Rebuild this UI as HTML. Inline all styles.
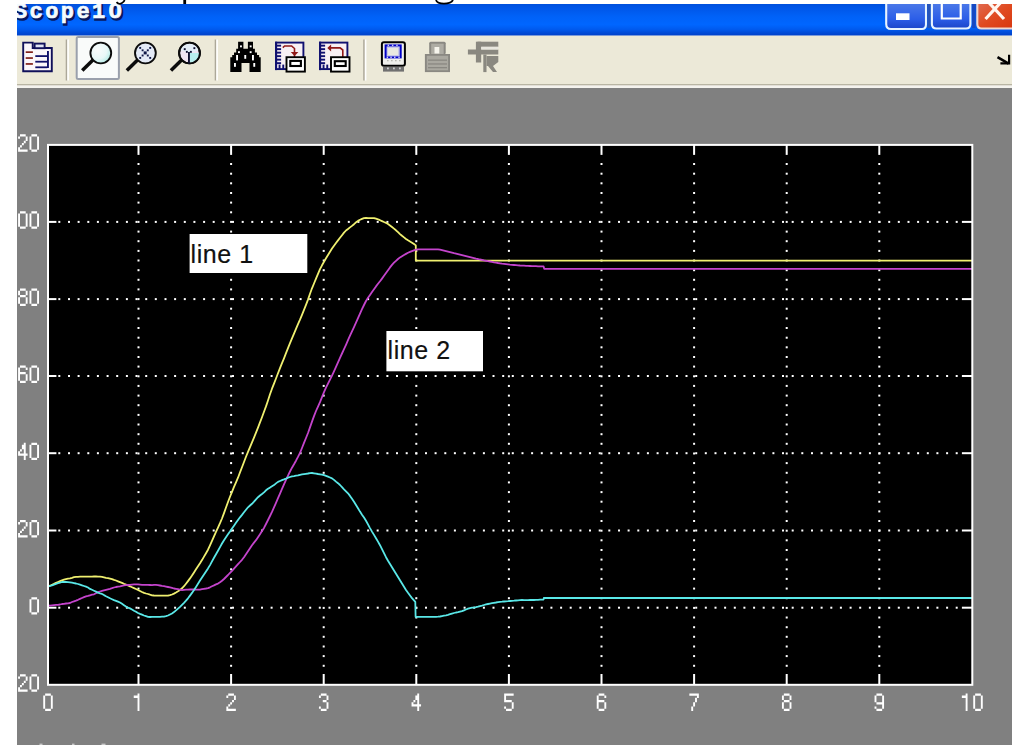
<!DOCTYPE html>
<html><head><meta charset="utf-8"><style>
html,body{margin:0;padding:0;background:#fff;width:1017px;height:750px;overflow:hidden}
svg{display:block}
</style></head><body>
<svg width="1017" height="750" viewBox="0 0 1017 750" shape-rendering="auto">
<rect width="1017" height="750" fill="#fff"/>
<clipPath id="win"><rect x="17" y="0" width="995" height="745"/></clipPath>
<g clip-path="url(#win)">
<defs><linearGradient id="tg" x1="0" y1="0" x2="0" y2="1"><stop offset="0" stop-color="#0050dc"/><stop offset="0.12" stop-color="#0056e8"/><stop offset="0.4" stop-color="#0062f8"/><stop offset="0.65" stop-color="#0066ff"/><stop offset="0.8" stop-color="#005aee"/><stop offset="0.9" stop-color="#004cd8"/><stop offset="1" stop-color="#0040c8"/></linearGradient><linearGradient id="bg" x1="0" y1="0" x2="0" y2="1"><stop offset="0" stop-color="#4a78e8"/><stop offset="0.6" stop-color="#2c5ee8"/><stop offset="1" stop-color="#1c46c8"/></linearGradient><linearGradient id="cg" x1="0" y1="0" x2="1" y2="1"><stop offset="0" stop-color="#e06a50"/><stop offset="0.5" stop-color="#e04a20"/><stop offset="1" stop-color="#d83810"/></linearGradient><radialGradient id="mg1" cx="0.6" cy="0.4" r="0.6"><stop offset="0" stop-color="#ffffff"/><stop offset="1" stop-color="#80e0e0"/></radialGradient></defs><rect x="17" y="4" width="995" height="31.7" fill="url(#tg)"/><g transform="translate(1.5,1.5)" fill="#081860" stroke="#081860" stroke-width="1.6"><text x="14" y="18.4" font-family="Liberation Mono" font-weight="bold" font-size="22" letter-spacing="2.4">Scope1</text><text x="108.6" y="18.4" font-family="Liberation Sans" font-weight="bold" font-size="22" transform="translate(108.6 18.4) scale(1.1 1) translate(-108.6 -18.4)">0</text></g><g transform="translate(0,0)" fill="#f4fbff" stroke="#f4fbff" stroke-width="0.7"><text x="14" y="18.4" font-family="Liberation Mono" font-weight="bold" font-size="22" letter-spacing="2.4">Scope1</text><text x="108.6" y="18.4" font-family="Liberation Sans" font-weight="bold" font-size="22" transform="translate(108.6 18.4) scale(1.1 1) translate(-108.6 -18.4)">0</text></g><path d="M886.2 4 V24 Q886.2 29 891 29 H922 Q926 29 926 24 V4 Z" fill="url(#bg)"/><path d="M886.2 4 V24 Q886.2 29 891 29 H922 Q926 29 926 24 V4" fill="none" stroke="#e8f4ff" stroke-width="2.1"/><rect x="896" y="13.3" width="13.5" height="6.7" fill="#fff"/><rect x="927.3" y="4" width="3.4" height="24" fill="#2854b8"/><path d="M931.9 4 V24 Q931.9 28.5 936.5 28.5 H966 Q970.4 28.5 970.4 24 V4 Z" fill="url(#bg)"/><path d="M931.9 4 V24 Q931.9 28.5 936.5 28.5 H966 Q970.4 28.5 970.4 24 V4" fill="none" stroke="#e8f4ff" stroke-width="2.1"/><path d="M941.8 4 V18.5 H960.7 V4" fill="none" stroke="#fff" stroke-width="2.2"/><rect x="972" y="4" width="3.5" height="24" fill="#1848c0"/><path d="M977.3 4 V24 Q977.3 28.5 981.5 28.5 H1012 V4 Z" fill="url(#cg)"/><path d="M977.3 4 V24 Q977.3 28.5 981.5 28.5 H1012" fill="none" stroke="#f0d8d0" stroke-width="2.1"/><path d="M985.5 -1 L1004 19 M1004 -1 L985.5 19" stroke="#fff6f0" stroke-width="3.2"/><rect x="0" y="0" width="1017" height="4" fill="#fff"/><path d="M116.5 2.2 Q119 5 122 3 Q124 2 124.6 0" fill="none" stroke="#000" stroke-width="1.8"/><rect x="183.3" y="0" width="2.8" height="4" fill="#000"/><path d="M436 0 Q437 3.6 444 3.6 Q451 3.6 453 0" fill="none" stroke="#000" stroke-width="1.8"/>
<rect x="17" y="35.7" width="995" height="48.3" fill="#ece9d8"/><rect x="17" y="84" width="995" height="1.6" fill="#b9b6a4"/><rect x="17" y="85.6" width="995" height="2.4" fill="#f4f3ee"/><rect x="65.7" y="39.5" width="1.6" height="41" fill="#aca899"/><rect x="67.3" y="39.5" width="1.6" height="41" fill="#ffffff"/><rect x="214.7" y="39.5" width="1.6" height="41" fill="#aca899"/><rect x="216.29999999999998" y="39.5" width="1.6" height="41" fill="#ffffff"/><rect x="363.2" y="39.5" width="1.6" height="41" fill="#aca899"/><rect x="364.8" y="39.5" width="1.6" height="41" fill="#ffffff"/><path d="M23.2 71.3 V42.6 H32.7 V48 H51.8 V71.3 Z" fill="#fbf6fa" stroke="#10105a" stroke-width="1.9"/><rect x="34.6" y="43.6" width="10" height="4.6" fill="#e0e4f4" stroke="#10105a" stroke-width="1.9"/><g fill="#802018"><rect x="25.7" y="51.3" width="7.2" height="1.7"/><rect x="25.7" y="57.2" width="7.2" height="1.7"/><rect x="25.7" y="63.1" width="7.2" height="1.7"/></g><g fill="#10106a"><rect x="47" y="51" width="1.9" height="17"/><rect x="35.3" y="55.2" width="12" height="1.8"/><rect x="35.3" y="60.8" width="12" height="1.8"/><rect x="35.3" y="66.4" width="12" height="1.8"/></g><rect x="76.7" y="37" width="42.2" height="41.9" rx="1.5" fill="#f9fbfa" stroke="#9aa0ac" stroke-width="2"/><radialGradient id="mg2" cx="0.35" cy="0.35" r="0.8"><stop offset="0" stop-color="#fafcfc"/><stop offset="0.55" stop-color="#e8f8f8"/><stop offset="1" stop-color="#a0e8e0"/></radialGradient><line x1="83.5" y1="69.3" x2="92.2" y2="60.8" stroke="#0c0c0c" stroke-width="3.5" stroke-linecap="square"/><circle cx="100.8" cy="53" r="10.4" fill="url(#mg2)" stroke="#0c0c0c" stroke-width="1.9"/><line x1="128.1" y1="69.3" x2="136.8" y2="60.8" stroke="#0c0c0c" stroke-width="3.5" stroke-linecap="square"/><circle cx="145.4" cy="53" r="10.4" fill="#e4eaf6" stroke="#0c0c0c" stroke-width="1.9"/><g fill="#101848"><rect x="139.25" y="46.95" width="1.9" height="1.9"/><rect x="139.25" y="56.95" width="1.9" height="1.9"/><rect x="141.65" y="49.35" width="1.9" height="1.9"/><rect x="141.65" y="54.55" width="1.9" height="1.9"/><rect x="146.85" y="49.35" width="1.9" height="1.9"/><rect x="146.85" y="54.55" width="1.9" height="1.9"/><rect x="149.25" y="46.95" width="1.9" height="1.9"/><rect x="149.25" y="56.95" width="1.9" height="1.9"/><rect x="143.7" y="51.4" width="3" height="3"/></g><line x1="172.2" y1="69.3" x2="180.9" y2="60.8" stroke="#0c0c0c" stroke-width="3.5" stroke-linecap="square"/><circle cx="189.5" cy="53" r="10.4" fill="#f0e4f2" stroke="#0c0c0c" stroke-width="1.9"/><path d="M189.5 53 L199.9 53 A10.4 10.4 0 0 1 189.5 63.4 Z" fill="#b8eeee"/><path d="M180 50 A10.4 10.4 0 0 1 199 50 L189.5 53 Z" fill="#e4eef8"/><circle cx="189.5" cy="53" r="10.4" fill="none" stroke="#0c0c0c" stroke-width="1.9"/><g fill="#101030"><rect x="183.8" y="48.2" width="1.9" height="1.9"/><rect x="185.9" y="50.9" width="1.9" height="1.9"/><rect x="193.4" y="47.2" width="1.9" height="1.9"/><rect x="189.9" y="50.9" width="1.9" height="1.9"/><rect x="188" y="52" width="1.9" height="11.6"/></g><path d="M238.1 41.7 H243.4 V48.7 H247.9 V41.7 H253 V48.7 H254.9 V52.5 H257 V55 H259.1 V57.2 H260.7 V71.9 H249.5 V63 H241.5 V71.9 H230.3 V57.2 H232.2 V55 H234 V52.5 H236.2 V48.7 H238.1 Z" fill="#000"/><g fill="#fff"><rect x="240.0" y="45.4" width="1.9" height="1.9"/><rect x="249.7" y="45.4" width="1.9" height="1.9"/><rect x="238.0" y="51.2" width="1.9" height="1.9"/><rect x="249.7" y="51.2" width="1.9" height="1.9"/><rect x="236.1" y="55" width="1.9" height="5.4"/><rect x="244.3" y="55" width="1.9" height="3.8"/><rect x="252" y="55" width="1.9" height="5.4"/><rect x="234" y="63" width="1.9" height="3.8"/><rect x="253.3" y="63" width="1.9" height="3.8"/></g><rect x="276.1" y="42.6" width="27.3" height="26.5" fill="#f8f0f4" stroke="#101070" stroke-width="1.9"/><rect x="275.1" y="41.7" width="2" height="28.4" fill="#101070"/><rect x="276.1" y="44.7" width="5" height="1.9" fill="#101070"/><rect x="276.1" y="48.2" width="5" height="1.9" fill="#101070"/><rect x="276.1" y="51.7" width="5" height="1.9" fill="#101070"/><rect x="276.1" y="55.2" width="5" height="1.9" fill="#101070"/><rect x="276.1" y="58.7" width="5" height="1.9" fill="#101070"/><rect x="276.1" y="62.2" width="5" height="1.9" fill="#101070"/><rect x="278.6" y="64.6" width="1.9" height="5" fill="#101070"/><rect x="282.3" y="64.6" width="1.9" height="5" fill="#101070"/><path d="M282.8 47.6 L284.6 46 H291.6 L294.5 48.5 V57" fill="none" stroke="#901818" stroke-width="1.6"/><path d="M290.70000000000005 52.1 H298.40000000000003 L294.55 56 Z" fill="#901818"/><rect x="286.5" y="57.2" width="18.4" height="14.4" fill="#fff" stroke="#000" stroke-width="1.9"/><rect x="290.3" y="60.9" width="10.6" height="5.1" fill="#ffffff" stroke="#000" stroke-width="2.1"/><rect x="320.1" y="42.6" width="27.3" height="26.5" fill="#f8f0f4" stroke="#101070" stroke-width="1.9"/><rect x="319.1" y="41.7" width="2" height="28.4" fill="#101070"/><rect x="320.1" y="44.7" width="5" height="1.9" fill="#101070"/><rect x="320.1" y="48.2" width="5" height="1.9" fill="#101070"/><rect x="320.1" y="51.7" width="5" height="1.9" fill="#101070"/><rect x="320.1" y="55.2" width="5" height="1.9" fill="#101070"/><rect x="320.1" y="58.7" width="5" height="1.9" fill="#101070"/><rect x="320.1" y="62.2" width="5" height="1.9" fill="#101070"/><rect x="322.6" y="64.6" width="1.9" height="5" fill="#101070"/><rect x="326.3" y="64.6" width="1.9" height="5" fill="#101070"/><path d="M329.1 47.9 H340.1 L342.8 50 V57" fill="none" stroke="#901818" stroke-width="1.6"/><path d="M331.1 44.4 V51.4 L327.3 47.9 Z" fill="#901818"/><rect x="331.0" y="57.2" width="18.5" height="14.4" fill="#fff" stroke="#000" stroke-width="1.9"/><rect x="334.8" y="61.2" width="10.9" height="4.8" fill="#ffffff" stroke="#000" stroke-width="2.1"/><rect x="381.9" y="42.2" width="23" height="23.5" rx="2" fill="#f0f0ec" stroke="#000" stroke-width="2"/><rect x="385.6" y="45.4" width="15.1" height="12" fill="#c8c8e8" stroke="#0000c8" stroke-width="2"/><rect x="388" y="48" width="10" height="7" fill="#e8e8e0"/><g fill="#c8c8f8"><rect x="387.6" y="44.6" width="1.5" height="1.5"/><rect x="391.9" y="44.6" width="1.5" height="1.5"/><rect x="396.2" y="44.6" width="1.5" height="1.5"/><rect x="386.6" y="56.6" width="1.5" height="1.5"/><rect x="390.3" y="56.6" width="1.5" height="1.5"/><rect x="394" y="56.6" width="1.5" height="1.5"/><rect x="398.3" y="56.6" width="1.5" height="1.5"/></g><g fill="#b8b8b0"><rect x="387" y="60" width="1.6" height="1.3"/><rect x="391" y="60" width="1.6" height="1.3"/><rect x="395" y="60" width="1.6" height="1.3"/><rect x="399" y="60" width="1.6" height="1.3"/></g><rect x="383" y="66.8" width="21" height="4.8" fill="#707070"/><g fill="#d0d0d0"><rect x="387" y="67.5" width="1.8" height="1.8"/><rect x="393" y="67.5" width="1.8" height="1.8"/><rect x="399" y="67.5" width="1.8" height="1.8"/></g><rect x="429.2" y="41.7" width="16.5" height="12.5" rx="1.5" fill="#8a8882"/><rect x="431.2" y="43.7" width="12.5" height="10.5" fill="#aeaca4"/><rect x="434.5" y="47" width="4.8" height="6.5" fill="#f6f4ec"/><rect x="424.9" y="54" width="25.1" height="18.1" fill="#8a8882"/><rect x="426.8" y="55.8" width="21.3" height="14.5" fill="#aaa8a0"/><g fill="#8a8882"><rect x="428" y="59.5" width="19" height="1.3"/><rect x="428" y="63.3" width="19" height="1.3"/><rect x="428" y="67" width="19" height="1.3"/></g><g fill="#8a8880"><rect x="477.5" y="41.7" width="20.8" height="5.1"/><rect x="475.9" y="41.7" width="5.3" height="20.8"/><rect x="467.9" y="49.5" width="30.4" height="5"/><rect x="483.3" y="54.5" width="3.2" height="17.6"/><path d="M486.5 56 H498.3 V62 L493 66 L497 72 H493 L488 66 H486.5 Z"/></g><rect x="481.2" y="46.8" width="17" height="2.7" fill="#e8e6de"/><path d="M1009.1 54.8 V63.4 H1000.4" fill="none" stroke="#000" stroke-width="2.2"/><path d="M997.5 57.2 L1008.6 63.6" fill="none" stroke="#000" stroke-width="2.6"/>
<rect x="17" y="88" width="995" height="657" fill="#808080"/><rect x="48.0" y="144.9" width="924.3" height="539.9" fill="#000"/><g fill="#fff"><rect x="137.5" y="163.0" width="2" height="2"/><rect x="137.5" y="172.7" width="2" height="2"/><rect x="137.5" y="182.3" width="2" height="2"/><rect x="137.5" y="192.0" width="2" height="2"/><rect x="137.5" y="201.6" width="2" height="2"/><rect x="137.5" y="211.3" width="2" height="2"/><rect x="137.5" y="220.9" width="2" height="2"/><rect x="137.5" y="230.6" width="2" height="2"/><rect x="137.5" y="240.2" width="2" height="2"/><rect x="137.5" y="249.9" width="2" height="2"/><rect x="137.5" y="259.5" width="2" height="2"/><rect x="137.5" y="269.2" width="2" height="2"/><rect x="137.5" y="278.8" width="2" height="2"/><rect x="137.5" y="288.4" width="2" height="2"/><rect x="137.5" y="298.1" width="2" height="2"/><rect x="137.5" y="307.7" width="2" height="2"/><rect x="137.5" y="317.4" width="2" height="2"/><rect x="137.5" y="327.0" width="2" height="2"/><rect x="137.5" y="336.7" width="2" height="2"/><rect x="137.5" y="346.3" width="2" height="2"/><rect x="137.5" y="356.0" width="2" height="2"/><rect x="137.5" y="365.6" width="2" height="2"/><rect x="137.5" y="375.3" width="2" height="2"/><rect x="137.5" y="384.9" width="2" height="2"/><rect x="137.5" y="394.6" width="2" height="2"/><rect x="137.5" y="404.2" width="2" height="2"/><rect x="137.5" y="413.9" width="2" height="2"/><rect x="137.5" y="423.5" width="2" height="2"/><rect x="137.5" y="433.2" width="2" height="2"/><rect x="137.5" y="442.8" width="2" height="2"/><rect x="137.5" y="452.5" width="2" height="2"/><rect x="137.5" y="462.1" width="2" height="2"/><rect x="137.5" y="471.8" width="2" height="2"/><rect x="137.5" y="481.4" width="2" height="2"/><rect x="137.5" y="491.1" width="2" height="2"/><rect x="137.5" y="500.7" width="2" height="2"/><rect x="137.5" y="510.4" width="2" height="2"/><rect x="137.5" y="520.0" width="2" height="2"/><rect x="137.5" y="529.7" width="2" height="2"/><rect x="137.5" y="539.3" width="2" height="2"/><rect x="137.5" y="549.0" width="2" height="2"/><rect x="137.5" y="558.6" width="2" height="2"/><rect x="137.5" y="568.3" width="2" height="2"/><rect x="137.5" y="577.9" width="2" height="2"/><rect x="137.5" y="587.6" width="2" height="2"/><rect x="137.5" y="597.2" width="2" height="2"/><rect x="137.5" y="606.9" width="2" height="2"/><rect x="137.5" y="616.5" width="2" height="2"/><rect x="137.5" y="626.2" width="2" height="2"/><rect x="137.5" y="635.8" width="2" height="2"/><rect x="137.5" y="645.5" width="2" height="2"/><rect x="137.5" y="655.1" width="2" height="2"/><rect x="137.5" y="664.8" width="2" height="2"/><rect x="230.1" y="163.0" width="2" height="2"/><rect x="230.1" y="172.7" width="2" height="2"/><rect x="230.1" y="182.3" width="2" height="2"/><rect x="230.1" y="192.0" width="2" height="2"/><rect x="230.1" y="201.6" width="2" height="2"/><rect x="230.1" y="211.3" width="2" height="2"/><rect x="230.1" y="220.9" width="2" height="2"/><rect x="230.1" y="230.6" width="2" height="2"/><rect x="230.1" y="240.2" width="2" height="2"/><rect x="230.1" y="249.9" width="2" height="2"/><rect x="230.1" y="259.5" width="2" height="2"/><rect x="230.1" y="269.2" width="2" height="2"/><rect x="230.1" y="278.8" width="2" height="2"/><rect x="230.1" y="288.4" width="2" height="2"/><rect x="230.1" y="298.1" width="2" height="2"/><rect x="230.1" y="307.7" width="2" height="2"/><rect x="230.1" y="317.4" width="2" height="2"/><rect x="230.1" y="327.0" width="2" height="2"/><rect x="230.1" y="336.7" width="2" height="2"/><rect x="230.1" y="346.3" width="2" height="2"/><rect x="230.1" y="356.0" width="2" height="2"/><rect x="230.1" y="365.6" width="2" height="2"/><rect x="230.1" y="375.3" width="2" height="2"/><rect x="230.1" y="384.9" width="2" height="2"/><rect x="230.1" y="394.6" width="2" height="2"/><rect x="230.1" y="404.2" width="2" height="2"/><rect x="230.1" y="413.9" width="2" height="2"/><rect x="230.1" y="423.5" width="2" height="2"/><rect x="230.1" y="433.2" width="2" height="2"/><rect x="230.1" y="442.8" width="2" height="2"/><rect x="230.1" y="452.5" width="2" height="2"/><rect x="230.1" y="462.1" width="2" height="2"/><rect x="230.1" y="471.8" width="2" height="2"/><rect x="230.1" y="481.4" width="2" height="2"/><rect x="230.1" y="491.1" width="2" height="2"/><rect x="230.1" y="500.7" width="2" height="2"/><rect x="230.1" y="510.4" width="2" height="2"/><rect x="230.1" y="520.0" width="2" height="2"/><rect x="230.1" y="529.7" width="2" height="2"/><rect x="230.1" y="539.3" width="2" height="2"/><rect x="230.1" y="549.0" width="2" height="2"/><rect x="230.1" y="558.6" width="2" height="2"/><rect x="230.1" y="568.3" width="2" height="2"/><rect x="230.1" y="577.9" width="2" height="2"/><rect x="230.1" y="587.6" width="2" height="2"/><rect x="230.1" y="597.2" width="2" height="2"/><rect x="230.1" y="606.9" width="2" height="2"/><rect x="230.1" y="616.5" width="2" height="2"/><rect x="230.1" y="626.2" width="2" height="2"/><rect x="230.1" y="635.8" width="2" height="2"/><rect x="230.1" y="645.5" width="2" height="2"/><rect x="230.1" y="655.1" width="2" height="2"/><rect x="230.1" y="664.8" width="2" height="2"/><rect x="322.7" y="163.0" width="2" height="2"/><rect x="322.7" y="172.7" width="2" height="2"/><rect x="322.7" y="182.3" width="2" height="2"/><rect x="322.7" y="192.0" width="2" height="2"/><rect x="322.7" y="201.6" width="2" height="2"/><rect x="322.7" y="211.3" width="2" height="2"/><rect x="322.7" y="220.9" width="2" height="2"/><rect x="322.7" y="230.6" width="2" height="2"/><rect x="322.7" y="240.2" width="2" height="2"/><rect x="322.7" y="249.9" width="2" height="2"/><rect x="322.7" y="259.5" width="2" height="2"/><rect x="322.7" y="269.2" width="2" height="2"/><rect x="322.7" y="278.8" width="2" height="2"/><rect x="322.7" y="288.4" width="2" height="2"/><rect x="322.7" y="298.1" width="2" height="2"/><rect x="322.7" y="307.7" width="2" height="2"/><rect x="322.7" y="317.4" width="2" height="2"/><rect x="322.7" y="327.0" width="2" height="2"/><rect x="322.7" y="336.7" width="2" height="2"/><rect x="322.7" y="346.3" width="2" height="2"/><rect x="322.7" y="356.0" width="2" height="2"/><rect x="322.7" y="365.6" width="2" height="2"/><rect x="322.7" y="375.3" width="2" height="2"/><rect x="322.7" y="384.9" width="2" height="2"/><rect x="322.7" y="394.6" width="2" height="2"/><rect x="322.7" y="404.2" width="2" height="2"/><rect x="322.7" y="413.9" width="2" height="2"/><rect x="322.7" y="423.5" width="2" height="2"/><rect x="322.7" y="433.2" width="2" height="2"/><rect x="322.7" y="442.8" width="2" height="2"/><rect x="322.7" y="452.5" width="2" height="2"/><rect x="322.7" y="462.1" width="2" height="2"/><rect x="322.7" y="471.8" width="2" height="2"/><rect x="322.7" y="481.4" width="2" height="2"/><rect x="322.7" y="491.1" width="2" height="2"/><rect x="322.7" y="500.7" width="2" height="2"/><rect x="322.7" y="510.4" width="2" height="2"/><rect x="322.7" y="520.0" width="2" height="2"/><rect x="322.7" y="529.7" width="2" height="2"/><rect x="322.7" y="539.3" width="2" height="2"/><rect x="322.7" y="549.0" width="2" height="2"/><rect x="322.7" y="558.6" width="2" height="2"/><rect x="322.7" y="568.3" width="2" height="2"/><rect x="322.7" y="577.9" width="2" height="2"/><rect x="322.7" y="587.6" width="2" height="2"/><rect x="322.7" y="597.2" width="2" height="2"/><rect x="322.7" y="606.9" width="2" height="2"/><rect x="322.7" y="616.5" width="2" height="2"/><rect x="322.7" y="626.2" width="2" height="2"/><rect x="322.7" y="635.8" width="2" height="2"/><rect x="322.7" y="645.5" width="2" height="2"/><rect x="322.7" y="655.1" width="2" height="2"/><rect x="322.7" y="664.8" width="2" height="2"/><rect x="415.3" y="163.0" width="2" height="2"/><rect x="415.3" y="172.7" width="2" height="2"/><rect x="415.3" y="182.3" width="2" height="2"/><rect x="415.3" y="192.0" width="2" height="2"/><rect x="415.3" y="201.6" width="2" height="2"/><rect x="415.3" y="211.3" width="2" height="2"/><rect x="415.3" y="220.9" width="2" height="2"/><rect x="415.3" y="230.6" width="2" height="2"/><rect x="415.3" y="240.2" width="2" height="2"/><rect x="415.3" y="249.9" width="2" height="2"/><rect x="415.3" y="259.5" width="2" height="2"/><rect x="415.3" y="269.2" width="2" height="2"/><rect x="415.3" y="278.8" width="2" height="2"/><rect x="415.3" y="288.4" width="2" height="2"/><rect x="415.3" y="298.1" width="2" height="2"/><rect x="415.3" y="307.7" width="2" height="2"/><rect x="415.3" y="317.4" width="2" height="2"/><rect x="415.3" y="327.0" width="2" height="2"/><rect x="415.3" y="336.7" width="2" height="2"/><rect x="415.3" y="346.3" width="2" height="2"/><rect x="415.3" y="356.0" width="2" height="2"/><rect x="415.3" y="365.6" width="2" height="2"/><rect x="415.3" y="375.3" width="2" height="2"/><rect x="415.3" y="384.9" width="2" height="2"/><rect x="415.3" y="394.6" width="2" height="2"/><rect x="415.3" y="404.2" width="2" height="2"/><rect x="415.3" y="413.9" width="2" height="2"/><rect x="415.3" y="423.5" width="2" height="2"/><rect x="415.3" y="433.2" width="2" height="2"/><rect x="415.3" y="442.8" width="2" height="2"/><rect x="415.3" y="452.5" width="2" height="2"/><rect x="415.3" y="462.1" width="2" height="2"/><rect x="415.3" y="471.8" width="2" height="2"/><rect x="415.3" y="481.4" width="2" height="2"/><rect x="415.3" y="491.1" width="2" height="2"/><rect x="415.3" y="500.7" width="2" height="2"/><rect x="415.3" y="510.4" width="2" height="2"/><rect x="415.3" y="520.0" width="2" height="2"/><rect x="415.3" y="529.7" width="2" height="2"/><rect x="415.3" y="539.3" width="2" height="2"/><rect x="415.3" y="549.0" width="2" height="2"/><rect x="415.3" y="558.6" width="2" height="2"/><rect x="415.3" y="568.3" width="2" height="2"/><rect x="415.3" y="577.9" width="2" height="2"/><rect x="415.3" y="587.6" width="2" height="2"/><rect x="415.3" y="597.2" width="2" height="2"/><rect x="415.3" y="606.9" width="2" height="2"/><rect x="415.3" y="616.5" width="2" height="2"/><rect x="415.3" y="626.2" width="2" height="2"/><rect x="415.3" y="635.8" width="2" height="2"/><rect x="415.3" y="645.5" width="2" height="2"/><rect x="415.3" y="655.1" width="2" height="2"/><rect x="415.3" y="664.8" width="2" height="2"/><rect x="507.9" y="163.0" width="2" height="2"/><rect x="507.9" y="172.7" width="2" height="2"/><rect x="507.9" y="182.3" width="2" height="2"/><rect x="507.9" y="192.0" width="2" height="2"/><rect x="507.9" y="201.6" width="2" height="2"/><rect x="507.9" y="211.3" width="2" height="2"/><rect x="507.9" y="220.9" width="2" height="2"/><rect x="507.9" y="230.6" width="2" height="2"/><rect x="507.9" y="240.2" width="2" height="2"/><rect x="507.9" y="249.9" width="2" height="2"/><rect x="507.9" y="259.5" width="2" height="2"/><rect x="507.9" y="269.2" width="2" height="2"/><rect x="507.9" y="278.8" width="2" height="2"/><rect x="507.9" y="288.4" width="2" height="2"/><rect x="507.9" y="298.1" width="2" height="2"/><rect x="507.9" y="307.7" width="2" height="2"/><rect x="507.9" y="317.4" width="2" height="2"/><rect x="507.9" y="327.0" width="2" height="2"/><rect x="507.9" y="336.7" width="2" height="2"/><rect x="507.9" y="346.3" width="2" height="2"/><rect x="507.9" y="356.0" width="2" height="2"/><rect x="507.9" y="365.6" width="2" height="2"/><rect x="507.9" y="375.3" width="2" height="2"/><rect x="507.9" y="384.9" width="2" height="2"/><rect x="507.9" y="394.6" width="2" height="2"/><rect x="507.9" y="404.2" width="2" height="2"/><rect x="507.9" y="413.9" width="2" height="2"/><rect x="507.9" y="423.5" width="2" height="2"/><rect x="507.9" y="433.2" width="2" height="2"/><rect x="507.9" y="442.8" width="2" height="2"/><rect x="507.9" y="452.5" width="2" height="2"/><rect x="507.9" y="462.1" width="2" height="2"/><rect x="507.9" y="471.8" width="2" height="2"/><rect x="507.9" y="481.4" width="2" height="2"/><rect x="507.9" y="491.1" width="2" height="2"/><rect x="507.9" y="500.7" width="2" height="2"/><rect x="507.9" y="510.4" width="2" height="2"/><rect x="507.9" y="520.0" width="2" height="2"/><rect x="507.9" y="529.7" width="2" height="2"/><rect x="507.9" y="539.3" width="2" height="2"/><rect x="507.9" y="549.0" width="2" height="2"/><rect x="507.9" y="558.6" width="2" height="2"/><rect x="507.9" y="568.3" width="2" height="2"/><rect x="507.9" y="577.9" width="2" height="2"/><rect x="507.9" y="587.6" width="2" height="2"/><rect x="507.9" y="597.2" width="2" height="2"/><rect x="507.9" y="606.9" width="2" height="2"/><rect x="507.9" y="616.5" width="2" height="2"/><rect x="507.9" y="626.2" width="2" height="2"/><rect x="507.9" y="635.8" width="2" height="2"/><rect x="507.9" y="645.5" width="2" height="2"/><rect x="507.9" y="655.1" width="2" height="2"/><rect x="507.9" y="664.8" width="2" height="2"/><rect x="600.5" y="163.0" width="2" height="2"/><rect x="600.5" y="172.7" width="2" height="2"/><rect x="600.5" y="182.3" width="2" height="2"/><rect x="600.5" y="192.0" width="2" height="2"/><rect x="600.5" y="201.6" width="2" height="2"/><rect x="600.5" y="211.3" width="2" height="2"/><rect x="600.5" y="220.9" width="2" height="2"/><rect x="600.5" y="230.6" width="2" height="2"/><rect x="600.5" y="240.2" width="2" height="2"/><rect x="600.5" y="249.9" width="2" height="2"/><rect x="600.5" y="259.5" width="2" height="2"/><rect x="600.5" y="269.2" width="2" height="2"/><rect x="600.5" y="278.8" width="2" height="2"/><rect x="600.5" y="288.4" width="2" height="2"/><rect x="600.5" y="298.1" width="2" height="2"/><rect x="600.5" y="307.7" width="2" height="2"/><rect x="600.5" y="317.4" width="2" height="2"/><rect x="600.5" y="327.0" width="2" height="2"/><rect x="600.5" y="336.7" width="2" height="2"/><rect x="600.5" y="346.3" width="2" height="2"/><rect x="600.5" y="356.0" width="2" height="2"/><rect x="600.5" y="365.6" width="2" height="2"/><rect x="600.5" y="375.3" width="2" height="2"/><rect x="600.5" y="384.9" width="2" height="2"/><rect x="600.5" y="394.6" width="2" height="2"/><rect x="600.5" y="404.2" width="2" height="2"/><rect x="600.5" y="413.9" width="2" height="2"/><rect x="600.5" y="423.5" width="2" height="2"/><rect x="600.5" y="433.2" width="2" height="2"/><rect x="600.5" y="442.8" width="2" height="2"/><rect x="600.5" y="452.5" width="2" height="2"/><rect x="600.5" y="462.1" width="2" height="2"/><rect x="600.5" y="471.8" width="2" height="2"/><rect x="600.5" y="481.4" width="2" height="2"/><rect x="600.5" y="491.1" width="2" height="2"/><rect x="600.5" y="500.7" width="2" height="2"/><rect x="600.5" y="510.4" width="2" height="2"/><rect x="600.5" y="520.0" width="2" height="2"/><rect x="600.5" y="529.7" width="2" height="2"/><rect x="600.5" y="539.3" width="2" height="2"/><rect x="600.5" y="549.0" width="2" height="2"/><rect x="600.5" y="558.6" width="2" height="2"/><rect x="600.5" y="568.3" width="2" height="2"/><rect x="600.5" y="577.9" width="2" height="2"/><rect x="600.5" y="587.6" width="2" height="2"/><rect x="600.5" y="597.2" width="2" height="2"/><rect x="600.5" y="606.9" width="2" height="2"/><rect x="600.5" y="616.5" width="2" height="2"/><rect x="600.5" y="626.2" width="2" height="2"/><rect x="600.5" y="635.8" width="2" height="2"/><rect x="600.5" y="645.5" width="2" height="2"/><rect x="600.5" y="655.1" width="2" height="2"/><rect x="600.5" y="664.8" width="2" height="2"/><rect x="693.1" y="163.0" width="2" height="2"/><rect x="693.1" y="172.7" width="2" height="2"/><rect x="693.1" y="182.3" width="2" height="2"/><rect x="693.1" y="192.0" width="2" height="2"/><rect x="693.1" y="201.6" width="2" height="2"/><rect x="693.1" y="211.3" width="2" height="2"/><rect x="693.1" y="220.9" width="2" height="2"/><rect x="693.1" y="230.6" width="2" height="2"/><rect x="693.1" y="240.2" width="2" height="2"/><rect x="693.1" y="249.9" width="2" height="2"/><rect x="693.1" y="259.5" width="2" height="2"/><rect x="693.1" y="269.2" width="2" height="2"/><rect x="693.1" y="278.8" width="2" height="2"/><rect x="693.1" y="288.4" width="2" height="2"/><rect x="693.1" y="298.1" width="2" height="2"/><rect x="693.1" y="307.7" width="2" height="2"/><rect x="693.1" y="317.4" width="2" height="2"/><rect x="693.1" y="327.0" width="2" height="2"/><rect x="693.1" y="336.7" width="2" height="2"/><rect x="693.1" y="346.3" width="2" height="2"/><rect x="693.1" y="356.0" width="2" height="2"/><rect x="693.1" y="365.6" width="2" height="2"/><rect x="693.1" y="375.3" width="2" height="2"/><rect x="693.1" y="384.9" width="2" height="2"/><rect x="693.1" y="394.6" width="2" height="2"/><rect x="693.1" y="404.2" width="2" height="2"/><rect x="693.1" y="413.9" width="2" height="2"/><rect x="693.1" y="423.5" width="2" height="2"/><rect x="693.1" y="433.2" width="2" height="2"/><rect x="693.1" y="442.8" width="2" height="2"/><rect x="693.1" y="452.5" width="2" height="2"/><rect x="693.1" y="462.1" width="2" height="2"/><rect x="693.1" y="471.8" width="2" height="2"/><rect x="693.1" y="481.4" width="2" height="2"/><rect x="693.1" y="491.1" width="2" height="2"/><rect x="693.1" y="500.7" width="2" height="2"/><rect x="693.1" y="510.4" width="2" height="2"/><rect x="693.1" y="520.0" width="2" height="2"/><rect x="693.1" y="529.7" width="2" height="2"/><rect x="693.1" y="539.3" width="2" height="2"/><rect x="693.1" y="549.0" width="2" height="2"/><rect x="693.1" y="558.6" width="2" height="2"/><rect x="693.1" y="568.3" width="2" height="2"/><rect x="693.1" y="577.9" width="2" height="2"/><rect x="693.1" y="587.6" width="2" height="2"/><rect x="693.1" y="597.2" width="2" height="2"/><rect x="693.1" y="606.9" width="2" height="2"/><rect x="693.1" y="616.5" width="2" height="2"/><rect x="693.1" y="626.2" width="2" height="2"/><rect x="693.1" y="635.8" width="2" height="2"/><rect x="693.1" y="645.5" width="2" height="2"/><rect x="693.1" y="655.1" width="2" height="2"/><rect x="693.1" y="664.8" width="2" height="2"/><rect x="785.7" y="163.0" width="2" height="2"/><rect x="785.7" y="172.7" width="2" height="2"/><rect x="785.7" y="182.3" width="2" height="2"/><rect x="785.7" y="192.0" width="2" height="2"/><rect x="785.7" y="201.6" width="2" height="2"/><rect x="785.7" y="211.3" width="2" height="2"/><rect x="785.7" y="220.9" width="2" height="2"/><rect x="785.7" y="230.6" width="2" height="2"/><rect x="785.7" y="240.2" width="2" height="2"/><rect x="785.7" y="249.9" width="2" height="2"/><rect x="785.7" y="259.5" width="2" height="2"/><rect x="785.7" y="269.2" width="2" height="2"/><rect x="785.7" y="278.8" width="2" height="2"/><rect x="785.7" y="288.4" width="2" height="2"/><rect x="785.7" y="298.1" width="2" height="2"/><rect x="785.7" y="307.7" width="2" height="2"/><rect x="785.7" y="317.4" width="2" height="2"/><rect x="785.7" y="327.0" width="2" height="2"/><rect x="785.7" y="336.7" width="2" height="2"/><rect x="785.7" y="346.3" width="2" height="2"/><rect x="785.7" y="356.0" width="2" height="2"/><rect x="785.7" y="365.6" width="2" height="2"/><rect x="785.7" y="375.3" width="2" height="2"/><rect x="785.7" y="384.9" width="2" height="2"/><rect x="785.7" y="394.6" width="2" height="2"/><rect x="785.7" y="404.2" width="2" height="2"/><rect x="785.7" y="413.9" width="2" height="2"/><rect x="785.7" y="423.5" width="2" height="2"/><rect x="785.7" y="433.2" width="2" height="2"/><rect x="785.7" y="442.8" width="2" height="2"/><rect x="785.7" y="452.5" width="2" height="2"/><rect x="785.7" y="462.1" width="2" height="2"/><rect x="785.7" y="471.8" width="2" height="2"/><rect x="785.7" y="481.4" width="2" height="2"/><rect x="785.7" y="491.1" width="2" height="2"/><rect x="785.7" y="500.7" width="2" height="2"/><rect x="785.7" y="510.4" width="2" height="2"/><rect x="785.7" y="520.0" width="2" height="2"/><rect x="785.7" y="529.7" width="2" height="2"/><rect x="785.7" y="539.3" width="2" height="2"/><rect x="785.7" y="549.0" width="2" height="2"/><rect x="785.7" y="558.6" width="2" height="2"/><rect x="785.7" y="568.3" width="2" height="2"/><rect x="785.7" y="577.9" width="2" height="2"/><rect x="785.7" y="587.6" width="2" height="2"/><rect x="785.7" y="597.2" width="2" height="2"/><rect x="785.7" y="606.9" width="2" height="2"/><rect x="785.7" y="616.5" width="2" height="2"/><rect x="785.7" y="626.2" width="2" height="2"/><rect x="785.7" y="635.8" width="2" height="2"/><rect x="785.7" y="645.5" width="2" height="2"/><rect x="785.7" y="655.1" width="2" height="2"/><rect x="785.7" y="664.8" width="2" height="2"/><rect x="878.3" y="163.0" width="2" height="2"/><rect x="878.3" y="172.7" width="2" height="2"/><rect x="878.3" y="182.3" width="2" height="2"/><rect x="878.3" y="192.0" width="2" height="2"/><rect x="878.3" y="201.6" width="2" height="2"/><rect x="878.3" y="211.3" width="2" height="2"/><rect x="878.3" y="220.9" width="2" height="2"/><rect x="878.3" y="230.6" width="2" height="2"/><rect x="878.3" y="240.2" width="2" height="2"/><rect x="878.3" y="249.9" width="2" height="2"/><rect x="878.3" y="259.5" width="2" height="2"/><rect x="878.3" y="269.2" width="2" height="2"/><rect x="878.3" y="278.8" width="2" height="2"/><rect x="878.3" y="288.4" width="2" height="2"/><rect x="878.3" y="298.1" width="2" height="2"/><rect x="878.3" y="307.7" width="2" height="2"/><rect x="878.3" y="317.4" width="2" height="2"/><rect x="878.3" y="327.0" width="2" height="2"/><rect x="878.3" y="336.7" width="2" height="2"/><rect x="878.3" y="346.3" width="2" height="2"/><rect x="878.3" y="356.0" width="2" height="2"/><rect x="878.3" y="365.6" width="2" height="2"/><rect x="878.3" y="375.3" width="2" height="2"/><rect x="878.3" y="384.9" width="2" height="2"/><rect x="878.3" y="394.6" width="2" height="2"/><rect x="878.3" y="404.2" width="2" height="2"/><rect x="878.3" y="413.9" width="2" height="2"/><rect x="878.3" y="423.5" width="2" height="2"/><rect x="878.3" y="433.2" width="2" height="2"/><rect x="878.3" y="442.8" width="2" height="2"/><rect x="878.3" y="452.5" width="2" height="2"/><rect x="878.3" y="462.1" width="2" height="2"/><rect x="878.3" y="471.8" width="2" height="2"/><rect x="878.3" y="481.4" width="2" height="2"/><rect x="878.3" y="491.1" width="2" height="2"/><rect x="878.3" y="500.7" width="2" height="2"/><rect x="878.3" y="510.4" width="2" height="2"/><rect x="878.3" y="520.0" width="2" height="2"/><rect x="878.3" y="529.7" width="2" height="2"/><rect x="878.3" y="539.3" width="2" height="2"/><rect x="878.3" y="549.0" width="2" height="2"/><rect x="878.3" y="558.6" width="2" height="2"/><rect x="878.3" y="568.3" width="2" height="2"/><rect x="878.3" y="577.9" width="2" height="2"/><rect x="878.3" y="587.6" width="2" height="2"/><rect x="878.3" y="597.2" width="2" height="2"/><rect x="878.3" y="606.9" width="2" height="2"/><rect x="878.3" y="616.5" width="2" height="2"/><rect x="878.3" y="626.2" width="2" height="2"/><rect x="878.3" y="635.8" width="2" height="2"/><rect x="878.3" y="645.5" width="2" height="2"/><rect x="878.3" y="655.1" width="2" height="2"/><rect x="878.3" y="664.8" width="2" height="2"/><rect x="58.3" y="220.9" width="2" height="2"/><rect x="68.0" y="220.9" width="2" height="2"/><rect x="77.6" y="220.9" width="2" height="2"/><rect x="87.3" y="220.9" width="2" height="2"/><rect x="96.9" y="220.9" width="2" height="2"/><rect x="106.6" y="220.9" width="2" height="2"/><rect x="116.2" y="220.9" width="2" height="2"/><rect x="125.9" y="220.9" width="2" height="2"/><rect x="135.5" y="220.9" width="2" height="2"/><rect x="145.2" y="220.9" width="2" height="2"/><rect x="154.8" y="220.9" width="2" height="2"/><rect x="164.5" y="220.9" width="2" height="2"/><rect x="174.1" y="220.9" width="2" height="2"/><rect x="183.8" y="220.9" width="2" height="2"/><rect x="193.4" y="220.9" width="2" height="2"/><rect x="203.1" y="220.9" width="2" height="2"/><rect x="212.7" y="220.9" width="2" height="2"/><rect x="222.4" y="220.9" width="2" height="2"/><rect x="232.0" y="220.9" width="2" height="2"/><rect x="241.7" y="220.9" width="2" height="2"/><rect x="251.3" y="220.9" width="2" height="2"/><rect x="261.0" y="220.9" width="2" height="2"/><rect x="270.6" y="220.9" width="2" height="2"/><rect x="280.3" y="220.9" width="2" height="2"/><rect x="289.9" y="220.9" width="2" height="2"/><rect x="299.6" y="220.9" width="2" height="2"/><rect x="309.2" y="220.9" width="2" height="2"/><rect x="318.8" y="220.9" width="2" height="2"/><rect x="328.5" y="220.9" width="2" height="2"/><rect x="338.1" y="220.9" width="2" height="2"/><rect x="347.8" y="220.9" width="2" height="2"/><rect x="357.4" y="220.9" width="2" height="2"/><rect x="367.1" y="220.9" width="2" height="2"/><rect x="376.7" y="220.9" width="2" height="2"/><rect x="386.4" y="220.9" width="2" height="2"/><rect x="396.0" y="220.9" width="2" height="2"/><rect x="405.7" y="220.9" width="2" height="2"/><rect x="415.3" y="220.9" width="2" height="2"/><rect x="425.0" y="220.9" width="2" height="2"/><rect x="434.6" y="220.9" width="2" height="2"/><rect x="444.3" y="220.9" width="2" height="2"/><rect x="453.9" y="220.9" width="2" height="2"/><rect x="463.6" y="220.9" width="2" height="2"/><rect x="473.2" y="220.9" width="2" height="2"/><rect x="482.9" y="220.9" width="2" height="2"/><rect x="492.5" y="220.9" width="2" height="2"/><rect x="502.2" y="220.9" width="2" height="2"/><rect x="511.8" y="220.9" width="2" height="2"/><rect x="521.5" y="220.9" width="2" height="2"/><rect x="531.1" y="220.9" width="2" height="2"/><rect x="540.8" y="220.9" width="2" height="2"/><rect x="550.4" y="220.9" width="2" height="2"/><rect x="560.1" y="220.9" width="2" height="2"/><rect x="569.7" y="220.9" width="2" height="2"/><rect x="579.4" y="220.9" width="2" height="2"/><rect x="589.0" y="220.9" width="2" height="2"/><rect x="598.7" y="220.9" width="2" height="2"/><rect x="608.3" y="220.9" width="2" height="2"/><rect x="618.0" y="220.9" width="2" height="2"/><rect x="627.6" y="220.9" width="2" height="2"/><rect x="637.3" y="220.9" width="2" height="2"/><rect x="646.9" y="220.9" width="2" height="2"/><rect x="656.6" y="220.9" width="2" height="2"/><rect x="666.2" y="220.9" width="2" height="2"/><rect x="675.9" y="220.9" width="2" height="2"/><rect x="685.5" y="220.9" width="2" height="2"/><rect x="695.2" y="220.9" width="2" height="2"/><rect x="704.8" y="220.9" width="2" height="2"/><rect x="714.5" y="220.9" width="2" height="2"/><rect x="724.1" y="220.9" width="2" height="2"/><rect x="733.8" y="220.9" width="2" height="2"/><rect x="743.4" y="220.9" width="2" height="2"/><rect x="753.1" y="220.9" width="2" height="2"/><rect x="762.7" y="220.9" width="2" height="2"/><rect x="772.4" y="220.9" width="2" height="2"/><rect x="782.0" y="220.9" width="2" height="2"/><rect x="791.7" y="220.9" width="2" height="2"/><rect x="801.3" y="220.9" width="2" height="2"/><rect x="811.0" y="220.9" width="2" height="2"/><rect x="820.6" y="220.9" width="2" height="2"/><rect x="830.3" y="220.9" width="2" height="2"/><rect x="839.9" y="220.9" width="2" height="2"/><rect x="849.6" y="220.9" width="2" height="2"/><rect x="859.2" y="220.9" width="2" height="2"/><rect x="868.9" y="220.9" width="2" height="2"/><rect x="878.5" y="220.9" width="2" height="2"/><rect x="888.2" y="220.9" width="2" height="2"/><rect x="897.8" y="220.9" width="2" height="2"/><rect x="907.5" y="220.9" width="2" height="2"/><rect x="917.1" y="220.9" width="2" height="2"/><rect x="926.8" y="220.9" width="2" height="2"/><rect x="936.4" y="220.9" width="2" height="2"/><rect x="946.1" y="220.9" width="2" height="2"/><rect x="955.7" y="220.9" width="2" height="2"/><rect x="58.3" y="298.1" width="2" height="2"/><rect x="68.0" y="298.1" width="2" height="2"/><rect x="77.6" y="298.1" width="2" height="2"/><rect x="87.3" y="298.1" width="2" height="2"/><rect x="96.9" y="298.1" width="2" height="2"/><rect x="106.6" y="298.1" width="2" height="2"/><rect x="116.2" y="298.1" width="2" height="2"/><rect x="125.9" y="298.1" width="2" height="2"/><rect x="135.5" y="298.1" width="2" height="2"/><rect x="145.2" y="298.1" width="2" height="2"/><rect x="154.8" y="298.1" width="2" height="2"/><rect x="164.5" y="298.1" width="2" height="2"/><rect x="174.1" y="298.1" width="2" height="2"/><rect x="183.8" y="298.1" width="2" height="2"/><rect x="193.4" y="298.1" width="2" height="2"/><rect x="203.1" y="298.1" width="2" height="2"/><rect x="212.7" y="298.1" width="2" height="2"/><rect x="222.4" y="298.1" width="2" height="2"/><rect x="232.0" y="298.1" width="2" height="2"/><rect x="241.7" y="298.1" width="2" height="2"/><rect x="251.3" y="298.1" width="2" height="2"/><rect x="261.0" y="298.1" width="2" height="2"/><rect x="270.6" y="298.1" width="2" height="2"/><rect x="280.3" y="298.1" width="2" height="2"/><rect x="289.9" y="298.1" width="2" height="2"/><rect x="299.6" y="298.1" width="2" height="2"/><rect x="309.2" y="298.1" width="2" height="2"/><rect x="318.8" y="298.1" width="2" height="2"/><rect x="328.5" y="298.1" width="2" height="2"/><rect x="338.1" y="298.1" width="2" height="2"/><rect x="347.8" y="298.1" width="2" height="2"/><rect x="357.4" y="298.1" width="2" height="2"/><rect x="367.1" y="298.1" width="2" height="2"/><rect x="376.7" y="298.1" width="2" height="2"/><rect x="386.4" y="298.1" width="2" height="2"/><rect x="396.0" y="298.1" width="2" height="2"/><rect x="405.7" y="298.1" width="2" height="2"/><rect x="415.3" y="298.1" width="2" height="2"/><rect x="425.0" y="298.1" width="2" height="2"/><rect x="434.6" y="298.1" width="2" height="2"/><rect x="444.3" y="298.1" width="2" height="2"/><rect x="453.9" y="298.1" width="2" height="2"/><rect x="463.6" y="298.1" width="2" height="2"/><rect x="473.2" y="298.1" width="2" height="2"/><rect x="482.9" y="298.1" width="2" height="2"/><rect x="492.5" y="298.1" width="2" height="2"/><rect x="502.2" y="298.1" width="2" height="2"/><rect x="511.8" y="298.1" width="2" height="2"/><rect x="521.5" y="298.1" width="2" height="2"/><rect x="531.1" y="298.1" width="2" height="2"/><rect x="540.8" y="298.1" width="2" height="2"/><rect x="550.4" y="298.1" width="2" height="2"/><rect x="560.1" y="298.1" width="2" height="2"/><rect x="569.7" y="298.1" width="2" height="2"/><rect x="579.4" y="298.1" width="2" height="2"/><rect x="589.0" y="298.1" width="2" height="2"/><rect x="598.7" y="298.1" width="2" height="2"/><rect x="608.3" y="298.1" width="2" height="2"/><rect x="618.0" y="298.1" width="2" height="2"/><rect x="627.6" y="298.1" width="2" height="2"/><rect x="637.3" y="298.1" width="2" height="2"/><rect x="646.9" y="298.1" width="2" height="2"/><rect x="656.6" y="298.1" width="2" height="2"/><rect x="666.2" y="298.1" width="2" height="2"/><rect x="675.9" y="298.1" width="2" height="2"/><rect x="685.5" y="298.1" width="2" height="2"/><rect x="695.2" y="298.1" width="2" height="2"/><rect x="704.8" y="298.1" width="2" height="2"/><rect x="714.5" y="298.1" width="2" height="2"/><rect x="724.1" y="298.1" width="2" height="2"/><rect x="733.8" y="298.1" width="2" height="2"/><rect x="743.4" y="298.1" width="2" height="2"/><rect x="753.1" y="298.1" width="2" height="2"/><rect x="762.7" y="298.1" width="2" height="2"/><rect x="772.4" y="298.1" width="2" height="2"/><rect x="782.0" y="298.1" width="2" height="2"/><rect x="791.7" y="298.1" width="2" height="2"/><rect x="801.3" y="298.1" width="2" height="2"/><rect x="811.0" y="298.1" width="2" height="2"/><rect x="820.6" y="298.1" width="2" height="2"/><rect x="830.3" y="298.1" width="2" height="2"/><rect x="839.9" y="298.1" width="2" height="2"/><rect x="849.6" y="298.1" width="2" height="2"/><rect x="859.2" y="298.1" width="2" height="2"/><rect x="868.9" y="298.1" width="2" height="2"/><rect x="878.5" y="298.1" width="2" height="2"/><rect x="888.2" y="298.1" width="2" height="2"/><rect x="897.8" y="298.1" width="2" height="2"/><rect x="907.5" y="298.1" width="2" height="2"/><rect x="917.1" y="298.1" width="2" height="2"/><rect x="926.8" y="298.1" width="2" height="2"/><rect x="936.4" y="298.1" width="2" height="2"/><rect x="946.1" y="298.1" width="2" height="2"/><rect x="955.7" y="298.1" width="2" height="2"/><rect x="58.3" y="375.0" width="2" height="2"/><rect x="68.0" y="375.0" width="2" height="2"/><rect x="77.6" y="375.0" width="2" height="2"/><rect x="87.3" y="375.0" width="2" height="2"/><rect x="96.9" y="375.0" width="2" height="2"/><rect x="106.6" y="375.0" width="2" height="2"/><rect x="116.2" y="375.0" width="2" height="2"/><rect x="125.9" y="375.0" width="2" height="2"/><rect x="135.5" y="375.0" width="2" height="2"/><rect x="145.2" y="375.0" width="2" height="2"/><rect x="154.8" y="375.0" width="2" height="2"/><rect x="164.5" y="375.0" width="2" height="2"/><rect x="174.1" y="375.0" width="2" height="2"/><rect x="183.8" y="375.0" width="2" height="2"/><rect x="193.4" y="375.0" width="2" height="2"/><rect x="203.1" y="375.0" width="2" height="2"/><rect x="212.7" y="375.0" width="2" height="2"/><rect x="222.4" y="375.0" width="2" height="2"/><rect x="232.0" y="375.0" width="2" height="2"/><rect x="241.7" y="375.0" width="2" height="2"/><rect x="251.3" y="375.0" width="2" height="2"/><rect x="261.0" y="375.0" width="2" height="2"/><rect x="270.6" y="375.0" width="2" height="2"/><rect x="280.3" y="375.0" width="2" height="2"/><rect x="289.9" y="375.0" width="2" height="2"/><rect x="299.6" y="375.0" width="2" height="2"/><rect x="309.2" y="375.0" width="2" height="2"/><rect x="318.8" y="375.0" width="2" height="2"/><rect x="328.5" y="375.0" width="2" height="2"/><rect x="338.1" y="375.0" width="2" height="2"/><rect x="347.8" y="375.0" width="2" height="2"/><rect x="357.4" y="375.0" width="2" height="2"/><rect x="367.1" y="375.0" width="2" height="2"/><rect x="376.7" y="375.0" width="2" height="2"/><rect x="386.4" y="375.0" width="2" height="2"/><rect x="396.0" y="375.0" width="2" height="2"/><rect x="405.7" y="375.0" width="2" height="2"/><rect x="415.3" y="375.0" width="2" height="2"/><rect x="425.0" y="375.0" width="2" height="2"/><rect x="434.6" y="375.0" width="2" height="2"/><rect x="444.3" y="375.0" width="2" height="2"/><rect x="453.9" y="375.0" width="2" height="2"/><rect x="463.6" y="375.0" width="2" height="2"/><rect x="473.2" y="375.0" width="2" height="2"/><rect x="482.9" y="375.0" width="2" height="2"/><rect x="492.5" y="375.0" width="2" height="2"/><rect x="502.2" y="375.0" width="2" height="2"/><rect x="511.8" y="375.0" width="2" height="2"/><rect x="521.5" y="375.0" width="2" height="2"/><rect x="531.1" y="375.0" width="2" height="2"/><rect x="540.8" y="375.0" width="2" height="2"/><rect x="550.4" y="375.0" width="2" height="2"/><rect x="560.1" y="375.0" width="2" height="2"/><rect x="569.7" y="375.0" width="2" height="2"/><rect x="579.4" y="375.0" width="2" height="2"/><rect x="589.0" y="375.0" width="2" height="2"/><rect x="598.7" y="375.0" width="2" height="2"/><rect x="608.3" y="375.0" width="2" height="2"/><rect x="618.0" y="375.0" width="2" height="2"/><rect x="627.6" y="375.0" width="2" height="2"/><rect x="637.3" y="375.0" width="2" height="2"/><rect x="646.9" y="375.0" width="2" height="2"/><rect x="656.6" y="375.0" width="2" height="2"/><rect x="666.2" y="375.0" width="2" height="2"/><rect x="675.9" y="375.0" width="2" height="2"/><rect x="685.5" y="375.0" width="2" height="2"/><rect x="695.2" y="375.0" width="2" height="2"/><rect x="704.8" y="375.0" width="2" height="2"/><rect x="714.5" y="375.0" width="2" height="2"/><rect x="724.1" y="375.0" width="2" height="2"/><rect x="733.8" y="375.0" width="2" height="2"/><rect x="743.4" y="375.0" width="2" height="2"/><rect x="753.1" y="375.0" width="2" height="2"/><rect x="762.7" y="375.0" width="2" height="2"/><rect x="772.4" y="375.0" width="2" height="2"/><rect x="782.0" y="375.0" width="2" height="2"/><rect x="791.7" y="375.0" width="2" height="2"/><rect x="801.3" y="375.0" width="2" height="2"/><rect x="811.0" y="375.0" width="2" height="2"/><rect x="820.6" y="375.0" width="2" height="2"/><rect x="830.3" y="375.0" width="2" height="2"/><rect x="839.9" y="375.0" width="2" height="2"/><rect x="849.6" y="375.0" width="2" height="2"/><rect x="859.2" y="375.0" width="2" height="2"/><rect x="868.9" y="375.0" width="2" height="2"/><rect x="878.5" y="375.0" width="2" height="2"/><rect x="888.2" y="375.0" width="2" height="2"/><rect x="897.8" y="375.0" width="2" height="2"/><rect x="907.5" y="375.0" width="2" height="2"/><rect x="917.1" y="375.0" width="2" height="2"/><rect x="926.8" y="375.0" width="2" height="2"/><rect x="936.4" y="375.0" width="2" height="2"/><rect x="946.1" y="375.0" width="2" height="2"/><rect x="955.7" y="375.0" width="2" height="2"/><rect x="58.3" y="452.2" width="2" height="2"/><rect x="68.0" y="452.2" width="2" height="2"/><rect x="77.6" y="452.2" width="2" height="2"/><rect x="87.3" y="452.2" width="2" height="2"/><rect x="96.9" y="452.2" width="2" height="2"/><rect x="106.6" y="452.2" width="2" height="2"/><rect x="116.2" y="452.2" width="2" height="2"/><rect x="125.9" y="452.2" width="2" height="2"/><rect x="135.5" y="452.2" width="2" height="2"/><rect x="145.2" y="452.2" width="2" height="2"/><rect x="154.8" y="452.2" width="2" height="2"/><rect x="164.5" y="452.2" width="2" height="2"/><rect x="174.1" y="452.2" width="2" height="2"/><rect x="183.8" y="452.2" width="2" height="2"/><rect x="193.4" y="452.2" width="2" height="2"/><rect x="203.1" y="452.2" width="2" height="2"/><rect x="212.7" y="452.2" width="2" height="2"/><rect x="222.4" y="452.2" width="2" height="2"/><rect x="232.0" y="452.2" width="2" height="2"/><rect x="241.7" y="452.2" width="2" height="2"/><rect x="251.3" y="452.2" width="2" height="2"/><rect x="261.0" y="452.2" width="2" height="2"/><rect x="270.6" y="452.2" width="2" height="2"/><rect x="280.3" y="452.2" width="2" height="2"/><rect x="289.9" y="452.2" width="2" height="2"/><rect x="299.6" y="452.2" width="2" height="2"/><rect x="309.2" y="452.2" width="2" height="2"/><rect x="318.8" y="452.2" width="2" height="2"/><rect x="328.5" y="452.2" width="2" height="2"/><rect x="338.1" y="452.2" width="2" height="2"/><rect x="347.8" y="452.2" width="2" height="2"/><rect x="357.4" y="452.2" width="2" height="2"/><rect x="367.1" y="452.2" width="2" height="2"/><rect x="376.7" y="452.2" width="2" height="2"/><rect x="386.4" y="452.2" width="2" height="2"/><rect x="396.0" y="452.2" width="2" height="2"/><rect x="405.7" y="452.2" width="2" height="2"/><rect x="415.3" y="452.2" width="2" height="2"/><rect x="425.0" y="452.2" width="2" height="2"/><rect x="434.6" y="452.2" width="2" height="2"/><rect x="444.3" y="452.2" width="2" height="2"/><rect x="453.9" y="452.2" width="2" height="2"/><rect x="463.6" y="452.2" width="2" height="2"/><rect x="473.2" y="452.2" width="2" height="2"/><rect x="482.9" y="452.2" width="2" height="2"/><rect x="492.5" y="452.2" width="2" height="2"/><rect x="502.2" y="452.2" width="2" height="2"/><rect x="511.8" y="452.2" width="2" height="2"/><rect x="521.5" y="452.2" width="2" height="2"/><rect x="531.1" y="452.2" width="2" height="2"/><rect x="540.8" y="452.2" width="2" height="2"/><rect x="550.4" y="452.2" width="2" height="2"/><rect x="560.1" y="452.2" width="2" height="2"/><rect x="569.7" y="452.2" width="2" height="2"/><rect x="579.4" y="452.2" width="2" height="2"/><rect x="589.0" y="452.2" width="2" height="2"/><rect x="598.7" y="452.2" width="2" height="2"/><rect x="608.3" y="452.2" width="2" height="2"/><rect x="618.0" y="452.2" width="2" height="2"/><rect x="627.6" y="452.2" width="2" height="2"/><rect x="637.3" y="452.2" width="2" height="2"/><rect x="646.9" y="452.2" width="2" height="2"/><rect x="656.6" y="452.2" width="2" height="2"/><rect x="666.2" y="452.2" width="2" height="2"/><rect x="675.9" y="452.2" width="2" height="2"/><rect x="685.5" y="452.2" width="2" height="2"/><rect x="695.2" y="452.2" width="2" height="2"/><rect x="704.8" y="452.2" width="2" height="2"/><rect x="714.5" y="452.2" width="2" height="2"/><rect x="724.1" y="452.2" width="2" height="2"/><rect x="733.8" y="452.2" width="2" height="2"/><rect x="743.4" y="452.2" width="2" height="2"/><rect x="753.1" y="452.2" width="2" height="2"/><rect x="762.7" y="452.2" width="2" height="2"/><rect x="772.4" y="452.2" width="2" height="2"/><rect x="782.0" y="452.2" width="2" height="2"/><rect x="791.7" y="452.2" width="2" height="2"/><rect x="801.3" y="452.2" width="2" height="2"/><rect x="811.0" y="452.2" width="2" height="2"/><rect x="820.6" y="452.2" width="2" height="2"/><rect x="830.3" y="452.2" width="2" height="2"/><rect x="839.9" y="452.2" width="2" height="2"/><rect x="849.6" y="452.2" width="2" height="2"/><rect x="859.2" y="452.2" width="2" height="2"/><rect x="868.9" y="452.2" width="2" height="2"/><rect x="878.5" y="452.2" width="2" height="2"/><rect x="888.2" y="452.2" width="2" height="2"/><rect x="897.8" y="452.2" width="2" height="2"/><rect x="907.5" y="452.2" width="2" height="2"/><rect x="917.1" y="452.2" width="2" height="2"/><rect x="926.8" y="452.2" width="2" height="2"/><rect x="936.4" y="452.2" width="2" height="2"/><rect x="946.1" y="452.2" width="2" height="2"/><rect x="955.7" y="452.2" width="2" height="2"/><rect x="58.3" y="529.5" width="2" height="2"/><rect x="68.0" y="529.5" width="2" height="2"/><rect x="77.6" y="529.5" width="2" height="2"/><rect x="87.3" y="529.5" width="2" height="2"/><rect x="96.9" y="529.5" width="2" height="2"/><rect x="106.6" y="529.5" width="2" height="2"/><rect x="116.2" y="529.5" width="2" height="2"/><rect x="125.9" y="529.5" width="2" height="2"/><rect x="135.5" y="529.5" width="2" height="2"/><rect x="145.2" y="529.5" width="2" height="2"/><rect x="154.8" y="529.5" width="2" height="2"/><rect x="164.5" y="529.5" width="2" height="2"/><rect x="174.1" y="529.5" width="2" height="2"/><rect x="183.8" y="529.5" width="2" height="2"/><rect x="193.4" y="529.5" width="2" height="2"/><rect x="203.1" y="529.5" width="2" height="2"/><rect x="212.7" y="529.5" width="2" height="2"/><rect x="222.4" y="529.5" width="2" height="2"/><rect x="232.0" y="529.5" width="2" height="2"/><rect x="241.7" y="529.5" width="2" height="2"/><rect x="251.3" y="529.5" width="2" height="2"/><rect x="261.0" y="529.5" width="2" height="2"/><rect x="270.6" y="529.5" width="2" height="2"/><rect x="280.3" y="529.5" width="2" height="2"/><rect x="289.9" y="529.5" width="2" height="2"/><rect x="299.6" y="529.5" width="2" height="2"/><rect x="309.2" y="529.5" width="2" height="2"/><rect x="318.8" y="529.5" width="2" height="2"/><rect x="328.5" y="529.5" width="2" height="2"/><rect x="338.1" y="529.5" width="2" height="2"/><rect x="347.8" y="529.5" width="2" height="2"/><rect x="357.4" y="529.5" width="2" height="2"/><rect x="367.1" y="529.5" width="2" height="2"/><rect x="376.7" y="529.5" width="2" height="2"/><rect x="386.4" y="529.5" width="2" height="2"/><rect x="396.0" y="529.5" width="2" height="2"/><rect x="405.7" y="529.5" width="2" height="2"/><rect x="415.3" y="529.5" width="2" height="2"/><rect x="425.0" y="529.5" width="2" height="2"/><rect x="434.6" y="529.5" width="2" height="2"/><rect x="444.3" y="529.5" width="2" height="2"/><rect x="453.9" y="529.5" width="2" height="2"/><rect x="463.6" y="529.5" width="2" height="2"/><rect x="473.2" y="529.5" width="2" height="2"/><rect x="482.9" y="529.5" width="2" height="2"/><rect x="492.5" y="529.5" width="2" height="2"/><rect x="502.2" y="529.5" width="2" height="2"/><rect x="511.8" y="529.5" width="2" height="2"/><rect x="521.5" y="529.5" width="2" height="2"/><rect x="531.1" y="529.5" width="2" height="2"/><rect x="540.8" y="529.5" width="2" height="2"/><rect x="550.4" y="529.5" width="2" height="2"/><rect x="560.1" y="529.5" width="2" height="2"/><rect x="569.7" y="529.5" width="2" height="2"/><rect x="579.4" y="529.5" width="2" height="2"/><rect x="589.0" y="529.5" width="2" height="2"/><rect x="598.7" y="529.5" width="2" height="2"/><rect x="608.3" y="529.5" width="2" height="2"/><rect x="618.0" y="529.5" width="2" height="2"/><rect x="627.6" y="529.5" width="2" height="2"/><rect x="637.3" y="529.5" width="2" height="2"/><rect x="646.9" y="529.5" width="2" height="2"/><rect x="656.6" y="529.5" width="2" height="2"/><rect x="666.2" y="529.5" width="2" height="2"/><rect x="675.9" y="529.5" width="2" height="2"/><rect x="685.5" y="529.5" width="2" height="2"/><rect x="695.2" y="529.5" width="2" height="2"/><rect x="704.8" y="529.5" width="2" height="2"/><rect x="714.5" y="529.5" width="2" height="2"/><rect x="724.1" y="529.5" width="2" height="2"/><rect x="733.8" y="529.5" width="2" height="2"/><rect x="743.4" y="529.5" width="2" height="2"/><rect x="753.1" y="529.5" width="2" height="2"/><rect x="762.7" y="529.5" width="2" height="2"/><rect x="772.4" y="529.5" width="2" height="2"/><rect x="782.0" y="529.5" width="2" height="2"/><rect x="791.7" y="529.5" width="2" height="2"/><rect x="801.3" y="529.5" width="2" height="2"/><rect x="811.0" y="529.5" width="2" height="2"/><rect x="820.6" y="529.5" width="2" height="2"/><rect x="830.3" y="529.5" width="2" height="2"/><rect x="839.9" y="529.5" width="2" height="2"/><rect x="849.6" y="529.5" width="2" height="2"/><rect x="859.2" y="529.5" width="2" height="2"/><rect x="868.9" y="529.5" width="2" height="2"/><rect x="878.5" y="529.5" width="2" height="2"/><rect x="888.2" y="529.5" width="2" height="2"/><rect x="897.8" y="529.5" width="2" height="2"/><rect x="907.5" y="529.5" width="2" height="2"/><rect x="917.1" y="529.5" width="2" height="2"/><rect x="926.8" y="529.5" width="2" height="2"/><rect x="936.4" y="529.5" width="2" height="2"/><rect x="946.1" y="529.5" width="2" height="2"/><rect x="955.7" y="529.5" width="2" height="2"/><rect x="58.3" y="606.7" width="2" height="2"/><rect x="68.0" y="606.7" width="2" height="2"/><rect x="77.6" y="606.7" width="2" height="2"/><rect x="87.3" y="606.7" width="2" height="2"/><rect x="96.9" y="606.7" width="2" height="2"/><rect x="106.6" y="606.7" width="2" height="2"/><rect x="116.2" y="606.7" width="2" height="2"/><rect x="125.9" y="606.7" width="2" height="2"/><rect x="135.5" y="606.7" width="2" height="2"/><rect x="145.2" y="606.7" width="2" height="2"/><rect x="154.8" y="606.7" width="2" height="2"/><rect x="164.5" y="606.7" width="2" height="2"/><rect x="174.1" y="606.7" width="2" height="2"/><rect x="183.8" y="606.7" width="2" height="2"/><rect x="193.4" y="606.7" width="2" height="2"/><rect x="203.1" y="606.7" width="2" height="2"/><rect x="212.7" y="606.7" width="2" height="2"/><rect x="222.4" y="606.7" width="2" height="2"/><rect x="232.0" y="606.7" width="2" height="2"/><rect x="241.7" y="606.7" width="2" height="2"/><rect x="251.3" y="606.7" width="2" height="2"/><rect x="261.0" y="606.7" width="2" height="2"/><rect x="270.6" y="606.7" width="2" height="2"/><rect x="280.3" y="606.7" width="2" height="2"/><rect x="289.9" y="606.7" width="2" height="2"/><rect x="299.6" y="606.7" width="2" height="2"/><rect x="309.2" y="606.7" width="2" height="2"/><rect x="318.8" y="606.7" width="2" height="2"/><rect x="328.5" y="606.7" width="2" height="2"/><rect x="338.1" y="606.7" width="2" height="2"/><rect x="347.8" y="606.7" width="2" height="2"/><rect x="357.4" y="606.7" width="2" height="2"/><rect x="367.1" y="606.7" width="2" height="2"/><rect x="376.7" y="606.7" width="2" height="2"/><rect x="386.4" y="606.7" width="2" height="2"/><rect x="396.0" y="606.7" width="2" height="2"/><rect x="405.7" y="606.7" width="2" height="2"/><rect x="415.3" y="606.7" width="2" height="2"/><rect x="425.0" y="606.7" width="2" height="2"/><rect x="434.6" y="606.7" width="2" height="2"/><rect x="444.3" y="606.7" width="2" height="2"/><rect x="453.9" y="606.7" width="2" height="2"/><rect x="463.6" y="606.7" width="2" height="2"/><rect x="473.2" y="606.7" width="2" height="2"/><rect x="482.9" y="606.7" width="2" height="2"/><rect x="492.5" y="606.7" width="2" height="2"/><rect x="502.2" y="606.7" width="2" height="2"/><rect x="511.8" y="606.7" width="2" height="2"/><rect x="521.5" y="606.7" width="2" height="2"/><rect x="531.1" y="606.7" width="2" height="2"/><rect x="540.8" y="606.7" width="2" height="2"/><rect x="550.4" y="606.7" width="2" height="2"/><rect x="560.1" y="606.7" width="2" height="2"/><rect x="569.7" y="606.7" width="2" height="2"/><rect x="579.4" y="606.7" width="2" height="2"/><rect x="589.0" y="606.7" width="2" height="2"/><rect x="598.7" y="606.7" width="2" height="2"/><rect x="608.3" y="606.7" width="2" height="2"/><rect x="618.0" y="606.7" width="2" height="2"/><rect x="627.6" y="606.7" width="2" height="2"/><rect x="637.3" y="606.7" width="2" height="2"/><rect x="646.9" y="606.7" width="2" height="2"/><rect x="656.6" y="606.7" width="2" height="2"/><rect x="666.2" y="606.7" width="2" height="2"/><rect x="675.9" y="606.7" width="2" height="2"/><rect x="685.5" y="606.7" width="2" height="2"/><rect x="695.2" y="606.7" width="2" height="2"/><rect x="704.8" y="606.7" width="2" height="2"/><rect x="714.5" y="606.7" width="2" height="2"/><rect x="724.1" y="606.7" width="2" height="2"/><rect x="733.8" y="606.7" width="2" height="2"/><rect x="743.4" y="606.7" width="2" height="2"/><rect x="753.1" y="606.7" width="2" height="2"/><rect x="762.7" y="606.7" width="2" height="2"/><rect x="772.4" y="606.7" width="2" height="2"/><rect x="782.0" y="606.7" width="2" height="2"/><rect x="791.7" y="606.7" width="2" height="2"/><rect x="801.3" y="606.7" width="2" height="2"/><rect x="811.0" y="606.7" width="2" height="2"/><rect x="820.6" y="606.7" width="2" height="2"/><rect x="830.3" y="606.7" width="2" height="2"/><rect x="839.9" y="606.7" width="2" height="2"/><rect x="849.6" y="606.7" width="2" height="2"/><rect x="859.2" y="606.7" width="2" height="2"/><rect x="868.9" y="606.7" width="2" height="2"/><rect x="878.5" y="606.7" width="2" height="2"/><rect x="888.2" y="606.7" width="2" height="2"/><rect x="897.8" y="606.7" width="2" height="2"/><rect x="907.5" y="606.7" width="2" height="2"/><rect x="917.1" y="606.7" width="2" height="2"/><rect x="926.8" y="606.7" width="2" height="2"/><rect x="936.4" y="606.7" width="2" height="2"/><rect x="946.1" y="606.7" width="2" height="2"/><rect x="955.7" y="606.7" width="2" height="2"/></g><g fill="#fff"><rect x="137.5" y="144.9" width="2" height="10"/><rect x="137.5" y="674.0" width="2" height="10.8"/><rect x="230.1" y="144.9" width="2" height="10"/><rect x="230.1" y="674.0" width="2" height="10.8"/><rect x="322.7" y="144.9" width="2" height="10"/><rect x="322.7" y="674.0" width="2" height="10.8"/><rect x="415.3" y="144.9" width="2" height="10"/><rect x="415.3" y="674.0" width="2" height="10.8"/><rect x="507.9" y="144.9" width="2" height="10"/><rect x="507.9" y="674.0" width="2" height="10.8"/><rect x="600.5" y="144.9" width="2" height="10"/><rect x="600.5" y="674.0" width="2" height="10.8"/><rect x="693.1" y="144.9" width="2" height="10"/><rect x="693.1" y="674.0" width="2" height="10.8"/><rect x="785.7" y="144.9" width="2" height="10"/><rect x="785.7" y="674.0" width="2" height="10.8"/><rect x="878.3" y="144.9" width="2" height="10"/><rect x="878.3" y="674.0" width="2" height="10.8"/><rect x="48.0" y="220.9" width="8.4" height="2"/><rect x="961.9" y="220.9" width="10.4" height="2"/><rect x="48.0" y="298.1" width="8.4" height="2"/><rect x="961.9" y="298.1" width="10.4" height="2"/><rect x="48.0" y="375.0" width="8.4" height="2"/><rect x="961.9" y="375.0" width="10.4" height="2"/><rect x="48.0" y="452.2" width="8.4" height="2"/><rect x="961.9" y="452.2" width="10.4" height="2"/><rect x="48.0" y="529.5" width="8.4" height="2"/><rect x="961.9" y="529.5" width="10.4" height="2"/><rect x="48.0" y="606.7" width="8.4" height="2"/><rect x="961.9" y="606.7" width="10.4" height="2"/></g><g fill="#c8c8c8"><rect x="39.5" y="743.6" width="3" height="1.4"/><rect x="72" y="743.6" width="2.5" height="1.4"/><rect x="101.5" y="743.6" width="4" height="1.4"/></g><rect x="189.6" y="234" width="117.7" height="39" fill="#fff"/><text x="190.5" y="262.6" font-family="Liberation Sans" font-size="25" letter-spacing="0.6" fill="#111" stroke="#111" stroke-width="0.2">line 1</text><rect x="386.4" y="331" width="96.6" height="40.3" fill="#fff"/><text x="387.5" y="359.4" font-family="Liberation Sans" font-size="25" letter-spacing="0.6" fill="#111" stroke="#111" stroke-width="0.2">line 2</text><polyline points="48.0,586.3 50.0,585.7 52.0,584.8 54.0,583.9 56.0,582.9 58.0,582.0 60.0,581.2 62.0,580.4 64.0,579.7 66.0,579.1 68.0,578.7 70.0,578.3 72.0,577.8 74.0,577.2 76.0,576.9 78.0,576.8 80.0,576.7 82.0,576.7 84.0,576.6 86.0,576.6 88.0,576.7 90.0,576.7 92.0,576.7 94.0,576.5 96.0,576.5 98.0,576.6 100.0,576.7 102.0,576.9 104.0,577.3 106.0,577.8 108.0,578.2 110.0,578.7 112.0,579.2 114.0,579.9 116.0,580.5 118.0,581.3 120.0,582.1 122.0,582.9 124.0,583.8 126.0,584.6 128.0,585.5 130.0,586.3 132.0,587.2 134.0,588.1 136.0,589.0 138.0,590.0 140.0,591.0 142.0,592.0 144.0,592.9 146.0,593.5 148.0,594.0 150.0,594.7 152.0,595.3 154.0,595.5 156.0,595.6 158.0,595.6 160.0,595.7 162.0,595.7 164.0,595.6 166.0,595.6 168.0,595.6 170.0,595.2 172.0,594.5 174.0,593.6 176.0,592.5 178.0,591.3 180.0,589.9 182.0,588.3 184.0,586.2 186.0,583.7 188.0,581.1 190.0,578.4 192.0,575.5 194.0,572.4 196.0,569.3 198.0,566.3 200.0,563.3 202.0,560.1 204.0,556.6 206.0,553.2 208.0,549.7 210.0,545.4 212.0,540.9 214.0,536.4 216.0,531.9 218.0,527.6 220.0,523.2 222.0,518.5 224.0,513.1 226.0,507.5 228.0,502.0 230.0,496.8 232.0,491.8 234.0,486.9 236.0,482.3 238.0,477.7 240.0,472.4 242.0,467.2 244.0,462.0 246.0,456.8 248.0,451.9 250.0,447.2 252.0,442.4 254.0,437.7 256.0,432.7 258.0,427.6 260.0,422.4 262.0,417.2 264.0,411.8 266.0,406.4 268.0,400.5 270.0,394.3 272.0,388.7 274.0,383.6 276.0,378.5 278.0,373.3 280.0,368.2 282.0,363.2 284.0,358.3 286.0,353.2 288.0,348.1 290.0,343.2 292.0,338.4 294.0,333.6 296.0,328.8 298.0,324.1 300.0,319.7 302.0,314.9 304.0,309.9 306.0,304.8 308.0,299.6 310.0,293.7 312.0,288.3 314.0,283.5 316.0,278.7 318.0,273.8 320.0,269.2 322.0,265.3 324.0,261.8 326.0,258.3 328.0,255.0 330.0,251.7 332.0,248.6 334.0,245.7 336.0,243.0 338.0,240.4 340.0,237.8 342.0,235.2 344.0,232.6 346.0,230.5 348.0,229.0 350.0,227.4 352.0,225.9 354.0,224.2 356.0,222.3 358.0,220.9 360.0,219.8 362.0,218.9 364.0,218.1 366.0,218.0 368.0,218.2 370.0,218.2 372.0,218.1 374.0,218.1 376.0,218.7 378.0,219.4 380.0,220.2 382.0,221.1 384.0,222.0 386.0,222.8 388.0,224.1 390.0,225.5 392.0,227.0 394.0,228.6 396.0,230.3 398.0,232.2 400.0,234.1 402.0,235.8 404.0,237.4 406.0,239.0 408.0,240.3 410.0,241.5 412.0,242.7 414.0,244.0 415.8,245.4 415.8,260.6 972.3,260.6" fill="none" stroke="#f0f070" stroke-width="1.8" stroke-linejoin="round"/><polyline points="48.0,605.4 50.0,605.6 52.0,605.3 54.0,605.1 56.0,604.9 58.0,604.8 60.0,604.5 62.0,604.0 64.0,603.8 66.0,603.5 68.0,603.3 70.0,603.0 72.0,602.0 74.0,601.3 76.0,600.6 78.0,599.8 80.0,598.9 82.0,598.0 84.0,597.1 86.0,596.4 88.0,595.9 90.0,595.3 92.0,594.7 94.0,594.3 96.0,593.2 98.0,592.1 100.0,591.5 102.0,590.9 104.0,590.3 106.0,589.8 108.0,589.3 110.0,588.8 112.0,588.2 114.0,587.5 116.0,587.0 118.0,586.6 120.0,586.3 122.0,585.8 124.0,585.4 126.0,585.2 128.0,585.0 130.0,584.9 132.0,584.6 134.0,584.4 136.0,584.3 138.0,584.4 140.0,584.6 142.0,584.8 144.0,584.9 146.0,584.8 148.0,584.8 150.0,585.0 152.0,585.2 154.0,584.9 156.0,584.9 158.0,585.1 160.0,585.5 162.0,585.9 164.0,586.2 166.0,586.6 168.0,587.0 170.0,587.4 172.0,587.9 174.0,588.5 176.0,588.8 178.0,589.2 180.0,589.6 182.0,590.1 184.0,589.9 186.0,589.7 188.0,589.6 190.0,589.5 192.0,589.5 194.0,589.5 196.0,589.6 198.0,589.7 200.0,589.6 202.0,589.2 204.0,588.8 206.0,588.5 208.0,588.1 210.0,587.3 212.0,586.3 214.0,585.4 216.0,584.4 218.0,583.6 220.0,582.3 222.0,580.7 224.0,579.0 226.0,577.0 228.0,575.0 230.0,572.9 232.0,570.8 234.0,568.6 236.0,566.4 238.0,564.2 240.0,562.0 242.0,559.8 244.0,557.2 246.0,554.2 248.0,551.2 250.0,548.2 252.0,545.2 254.0,542.6 256.0,540.2 258.0,537.2 260.0,534.2 262.0,531.1 264.0,527.9 266.0,524.0 268.0,520.0 270.0,516.0 272.0,511.9 274.0,507.4 276.0,502.9 278.0,498.2 280.0,493.6 282.0,488.9 284.0,484.3 286.0,479.9 288.0,475.6 290.0,471.5 292.0,467.7 294.0,464.3 296.0,460.7 298.0,456.9 300.0,452.8 302.0,448.0 304.0,442.9 306.0,438.0 308.0,433.0 310.0,427.4 312.0,421.6 314.0,416.1 316.0,411.0 318.0,406.6 320.0,402.2 322.0,397.2 324.0,392.2 326.0,387.7 328.0,383.6 330.0,379.7 332.0,375.7 334.0,371.3 336.0,366.8 338.0,362.3 340.0,357.8 342.0,353.5 344.0,349.2 346.0,344.8 348.0,340.2 350.0,335.7 352.0,331.3 354.0,327.1 356.0,322.7 358.0,318.1 360.0,313.6 362.0,309.2 364.0,305.0 366.0,301.0 368.0,297.8 370.0,295.0 372.0,292.1 374.0,289.3 376.0,286.4 378.0,283.8 380.0,281.3 382.0,278.6 384.0,275.8 386.0,273.0 388.0,270.2 390.0,267.4 392.0,264.9 394.0,262.7 396.0,260.8 398.0,259.0 400.0,257.4 402.0,256.2 404.0,255.0 406.0,253.9 408.0,252.8 410.0,251.9 412.0,251.1 414.0,250.3 416.0,249.7 418.0,249.4 420.0,249.3 422.0,249.3 424.0,249.3 426.0,249.3 428.0,249.3 430.0,249.3 432.0,249.3 434.0,249.3 436.0,249.3 438.0,249.4 440.0,249.7 442.0,250.2 444.0,250.7 446.0,251.2 448.0,251.7 450.0,252.2 452.0,252.7 454.0,253.2 456.0,253.6 458.0,254.1 460.0,254.6 462.0,255.1 464.0,255.6 466.0,256.1 468.0,256.6 470.0,257.1 472.0,257.6 474.0,258.1 476.0,258.6 478.0,259.0 480.0,259.5 482.0,259.9 484.0,260.4 486.0,260.8 488.0,261.2 490.0,261.5 492.0,261.9 494.0,262.3 496.0,262.6 498.0,263.0 500.0,263.3 502.0,263.6 504.0,263.8 506.0,264.1 508.0,264.4 510.0,264.7 512.0,264.9 514.0,265.0 516.0,265.1 518.0,265.3 520.0,265.5 522.0,265.6 524.0,265.7 526.0,265.8 528.0,265.9 530.0,266.0 532.0,266.1 534.0,266.2 536.0,266.2 538.0,266.3 540.0,266.3 542.0,266.4 543.6,266.4 544.2,268.8 972.3,268.8" fill="none" stroke="#c444cc" stroke-width="1.8" stroke-linejoin="round"/><polyline points="48.0,586.6 50.0,586.0 52.0,585.4 54.0,584.6 56.0,583.9 58.0,583.2 60.0,582.6 62.0,582.0 64.0,581.8 66.0,582.0 68.0,582.2 70.0,582.4 72.0,582.7 74.0,583.1 76.0,583.5 78.0,584.0 80.0,584.6 82.0,585.3 84.0,586.0 86.0,586.7 88.0,587.5 90.0,588.9 92.0,589.8 94.0,590.7 96.0,591.6 98.0,592.7 100.0,593.4 102.0,593.9 104.0,595.1 106.0,596.2 108.0,597.2 110.0,598.3 112.0,599.2 114.0,600.1 116.0,600.8 118.0,601.6 120.0,602.5 122.0,603.8 124.0,605.2 126.0,606.6 128.0,607.6 130.0,608.4 132.0,609.5 134.0,610.7 136.0,611.8 138.0,613.0 140.0,613.9 142.0,614.7 144.0,615.5 146.0,616.2 148.0,616.9 150.0,617.0 152.0,616.8 154.0,616.8 156.0,616.8 158.0,616.8 160.0,616.8 162.0,616.7 164.0,616.6 166.0,616.2 168.0,615.5 170.0,614.5 172.0,613.5 174.0,612.1 176.0,610.4 178.0,608.6 180.0,606.8 182.0,604.8 184.0,602.8 186.0,600.7 188.0,598.3 190.0,595.6 192.0,592.9 194.0,590.0 196.0,586.9 198.0,583.8 200.0,580.6 202.0,577.5 204.0,574.5 206.0,571.4 208.0,568.4 210.0,565.1 212.0,561.4 214.0,557.8 216.0,554.3 218.0,550.7 220.0,547.1 222.0,543.5 224.0,540.2 226.0,537.2 228.0,534.3 230.0,531.5 232.0,528.5 234.0,525.7 236.0,522.8 238.0,520.0 240.0,517.3 242.0,514.9 244.0,512.3 246.0,509.8 248.0,507.3 250.0,505.5 252.0,503.8 254.0,501.7 256.0,499.3 258.0,497.2 260.0,495.5 262.0,494.0 264.0,492.4 266.0,490.3 268.0,488.7 270.0,487.6 272.0,486.3 274.0,485.1 276.0,483.4 278.0,481.9 280.0,481.0 282.0,480.1 284.0,479.4 286.0,478.6 288.0,477.7 290.0,477.0 292.0,476.4 294.0,476.1 296.0,475.7 298.0,475.4 300.0,474.8 302.0,474.4 304.0,474.1 306.0,473.8 308.0,473.5 310.0,473.1 312.0,473.0 314.0,473.3 316.0,473.6 318.0,474.0 320.0,474.3 322.0,474.6 324.0,475.2 326.0,475.9 328.0,476.7 330.0,477.5 332.0,478.4 334.0,479.9 336.0,481.6 338.0,483.2 340.0,485.0 342.0,487.1 344.0,489.3 346.0,491.3 348.0,493.3 350.0,495.9 352.0,498.8 354.0,501.8 356.0,505.0 358.0,508.3 360.0,511.6 362.0,514.7 364.0,517.6 366.0,520.8 368.0,524.4 370.0,528.1 372.0,531.6 374.0,534.9 376.0,538.2 378.0,541.6 380.0,545.2 382.0,549.2 384.0,553.2 386.0,557.2 388.0,560.7 390.0,564.0 392.0,567.3 394.0,570.5 396.0,573.7 398.0,577.0 400.0,580.3 402.0,583.5 404.0,586.7 406.0,589.9 408.0,592.8 410.0,595.5 412.0,598.1 414.0,600.4 415.3,601.9 415.6,616.8 416.0,616.8 418.0,616.8 420.0,616.8 422.0,616.8 424.0,616.8 426.0,616.8 428.0,616.8 430.0,616.8 432.0,616.8 434.0,616.8 436.0,616.8 438.0,616.7 440.0,616.5 442.0,616.1 444.0,615.7 446.0,615.3 448.0,614.8 450.0,614.2 452.0,613.6 454.0,613.0 456.0,612.5 458.0,612.1 460.0,611.6 462.0,611.1 464.0,610.3 466.0,609.5 468.0,608.7 470.0,608.1 472.0,607.7 474.0,607.6 476.0,607.2 478.0,606.7 480.0,606.1 482.0,605.6 484.0,605.0 486.0,604.4 488.0,604.0 490.0,603.6 492.0,603.2 494.0,602.8 496.0,602.5 498.0,602.1 500.0,601.8 502.0,601.7 504.0,601.5 506.0,601.3 508.0,601.2 510.0,601.0 512.0,600.8 514.0,600.7 516.0,600.5 518.0,600.3 520.0,600.1 522.0,600.0 524.0,600.1 526.0,600.2 528.0,600.1 530.0,600.0 532.0,600.0 534.0,600.0 536.0,599.9 538.0,599.8 540.0,599.7 542.0,599.6 543.6,599.5 543.8,598.0 972.3,598.0" fill="none" stroke="#5ae8e8" stroke-width="1.8" stroke-linejoin="round"/><rect x="48.0" y="144.9" width="924.3" height="539.9" fill="none" stroke="#fff" stroke-width="2"/><path fill="#fff" d="M45.15 693.45h5.70v2.27h-5.70zM43.25 695.62h1.90v2.27h-1.90zM50.85 695.62h1.90v2.27h-1.90zM43.25 697.79h1.90v2.27h-1.90zM50.85 697.79h1.90v2.27h-1.90zM43.25 699.96h1.90v2.27h-1.90zM50.85 699.96h1.90v2.27h-1.90zM43.25 702.13h1.90v2.27h-1.90zM50.85 702.13h1.90v2.27h-1.90zM43.25 704.30h1.90v2.27h-1.90zM50.85 704.30h1.90v2.27h-1.90zM43.25 706.47h1.90v2.27h-1.90zM50.85 706.47h1.90v2.27h-1.90zM45.15 708.64h5.70v2.27h-5.70zM137.55 693.45h1.90v2.27h-1.90zM133.75 695.62h5.70v2.27h-5.70zM137.55 697.79h1.90v2.27h-1.90zM137.55 699.96h1.90v2.27h-1.90zM137.55 702.13h1.90v2.27h-1.90zM137.55 704.30h1.90v2.27h-1.90zM137.55 706.47h1.90v2.27h-1.90zM137.55 708.64h1.90v2.27h-1.90zM228.25 693.45h5.70v2.27h-5.70zM226.35 695.62h1.90v2.27h-1.90zM233.95 695.62h1.90v2.27h-1.90zM233.95 697.79h1.90v2.27h-1.90zM232.05 699.96h1.90v2.27h-1.90zM230.15 702.13h1.90v2.27h-1.90zM228.25 704.30h1.90v2.27h-1.90zM226.35 706.47h1.90v2.27h-1.90zM226.35 708.64h9.50v2.27h-9.50zM320.85 693.45h5.70v2.27h-5.70zM318.95 695.62h1.90v2.27h-1.90zM326.55 695.62h1.90v2.27h-1.90zM326.55 697.79h1.90v2.27h-1.90zM322.75 699.96h3.80v2.27h-3.80zM326.55 702.13h1.90v2.27h-1.90zM326.55 704.30h1.90v2.27h-1.90zM318.95 706.47h1.90v2.27h-1.90zM326.55 706.47h1.90v2.27h-1.90zM320.85 708.64h5.70v2.27h-5.70zM417.25 693.45h1.90v2.27h-1.90zM415.35 695.62h3.80v2.27h-3.80zM415.35 697.79h3.80v2.27h-3.80zM413.45 699.96h1.90v2.27h-1.90zM417.25 699.96h1.90v2.27h-1.90zM411.55 702.13h1.90v2.27h-1.90zM417.25 702.13h1.90v2.27h-1.90zM411.55 704.30h9.50v2.27h-9.50zM417.25 706.47h1.90v2.27h-1.90zM417.25 708.64h1.90v2.27h-1.90zM504.15 693.45h9.50v2.27h-9.50zM504.15 695.62h1.90v2.27h-1.90zM504.15 697.79h1.90v2.27h-1.90zM504.15 699.96h7.60v2.27h-7.60zM511.75 702.13h1.90v2.27h-1.90zM511.75 704.30h1.90v2.27h-1.90zM504.15 706.47h1.90v2.27h-1.90zM511.75 706.47h1.90v2.27h-1.90zM506.05 708.64h5.70v2.27h-5.70zM598.65 693.45h5.70v2.27h-5.70zM596.75 695.62h1.90v2.27h-1.90zM604.35 695.62h1.90v2.27h-1.90zM596.75 697.79h1.90v2.27h-1.90zM596.75 699.96h7.60v2.27h-7.60zM596.75 702.13h1.90v2.27h-1.90zM604.35 702.13h1.90v2.27h-1.90zM596.75 704.30h1.90v2.27h-1.90zM604.35 704.30h1.90v2.27h-1.90zM596.75 706.47h1.90v2.27h-1.90zM604.35 706.47h1.90v2.27h-1.90zM598.65 708.64h5.70v2.27h-5.70zM689.35 693.45h9.50v2.27h-9.50zM696.95 695.62h1.90v2.27h-1.90zM695.05 697.79h1.90v2.27h-1.90zM695.05 699.96h1.90v2.27h-1.90zM693.15 702.13h1.90v2.27h-1.90zM693.15 704.30h1.90v2.27h-1.90zM691.25 706.47h1.90v2.27h-1.90zM691.25 708.64h1.90v2.27h-1.90zM783.85 693.45h5.70v2.27h-5.70zM781.95 695.62h1.90v2.27h-1.90zM789.55 695.62h1.90v2.27h-1.90zM781.95 697.79h1.90v2.27h-1.90zM789.55 697.79h1.90v2.27h-1.90zM783.85 699.96h5.70v2.27h-5.70zM781.95 702.13h1.90v2.27h-1.90zM789.55 702.13h1.90v2.27h-1.90zM781.95 704.30h1.90v2.27h-1.90zM789.55 704.30h1.90v2.27h-1.90zM781.95 706.47h1.90v2.27h-1.90zM789.55 706.47h1.90v2.27h-1.90zM783.85 708.64h5.70v2.27h-5.70zM876.45 693.45h5.70v2.27h-5.70zM874.55 695.62h1.90v2.27h-1.90zM882.15 695.62h1.90v2.27h-1.90zM874.55 697.79h1.90v2.27h-1.90zM882.15 697.79h1.90v2.27h-1.90zM874.55 699.96h1.90v2.27h-1.90zM882.15 699.96h1.90v2.27h-1.90zM876.45 702.13h7.60v2.27h-7.60zM882.15 704.30h1.90v2.27h-1.90zM874.55 706.47h1.90v2.27h-1.90zM882.15 706.47h1.90v2.27h-1.90zM876.45 708.64h5.70v2.27h-5.70zM965.65 693.45h1.90v2.27h-1.90zM961.85 695.62h5.70v2.27h-5.70zM965.65 697.79h1.90v2.27h-1.90zM965.65 699.96h1.90v2.27h-1.90zM965.65 702.13h1.90v2.27h-1.90zM965.65 704.30h1.90v2.27h-1.90zM965.65 706.47h1.90v2.27h-1.90zM965.65 708.64h1.90v2.27h-1.90zM975.15 693.45h5.70v2.27h-5.70zM973.25 695.62h1.90v2.27h-1.90zM980.85 695.62h1.90v2.27h-1.90zM973.25 697.79h1.90v2.27h-1.90zM980.85 697.79h1.90v2.27h-1.90zM973.25 699.96h1.90v2.27h-1.90zM980.85 699.96h1.90v2.27h-1.90zM973.25 702.13h1.90v2.27h-1.90zM980.85 702.13h1.90v2.27h-1.90zM973.25 704.30h1.90v2.27h-1.90zM980.85 704.30h1.90v2.27h-1.90zM973.25 706.47h1.90v2.27h-1.90zM980.85 706.47h1.90v2.27h-1.90zM975.15 708.64h5.70v2.27h-5.70zM10.50 134.35h1.90v2.27h-1.90zM6.70 136.52h5.70v2.27h-5.70zM10.50 138.69h1.90v2.27h-1.90zM10.50 140.86h1.90v2.27h-1.90zM10.50 143.03h1.90v2.27h-1.90zM10.50 145.20h1.90v2.27h-1.90zM10.50 147.37h1.90v2.27h-1.90zM10.50 149.54h1.90v2.27h-1.90zM20.00 134.35h5.70v2.27h-5.70zM18.10 136.52h1.90v2.27h-1.90zM25.70 136.52h1.90v2.27h-1.90zM25.70 138.69h1.90v2.27h-1.90zM23.80 140.86h1.90v2.27h-1.90zM21.90 143.03h1.90v2.27h-1.90zM20.00 145.20h1.90v2.27h-1.90zM18.10 147.37h1.90v2.27h-1.90zM18.10 149.54h9.50v2.27h-9.50zM31.40 134.35h5.70v2.27h-5.70zM29.50 136.52h1.90v2.27h-1.90zM37.10 136.52h1.90v2.27h-1.90zM29.50 138.69h1.90v2.27h-1.90zM37.10 138.69h1.90v2.27h-1.90zM29.50 140.86h1.90v2.27h-1.90zM37.10 140.86h1.90v2.27h-1.90zM29.50 143.03h1.90v2.27h-1.90zM37.10 143.03h1.90v2.27h-1.90zM29.50 145.20h1.90v2.27h-1.90zM37.10 145.20h1.90v2.27h-1.90zM29.50 147.37h1.90v2.27h-1.90zM37.10 147.37h1.90v2.27h-1.90zM31.40 149.54h5.70v2.27h-5.70zM10.50 211.35h1.90v2.27h-1.90zM6.70 213.52h5.70v2.27h-5.70zM10.50 215.69h1.90v2.27h-1.90zM10.50 217.86h1.90v2.27h-1.90zM10.50 220.03h1.90v2.27h-1.90zM10.50 222.20h1.90v2.27h-1.90zM10.50 224.37h1.90v2.27h-1.90zM10.50 226.54h1.90v2.27h-1.90zM20.00 211.35h5.70v2.27h-5.70zM18.10 213.52h1.90v2.27h-1.90zM25.70 213.52h1.90v2.27h-1.90zM18.10 215.69h1.90v2.27h-1.90zM25.70 215.69h1.90v2.27h-1.90zM18.10 217.86h1.90v2.27h-1.90zM25.70 217.86h1.90v2.27h-1.90zM18.10 220.03h1.90v2.27h-1.90zM25.70 220.03h1.90v2.27h-1.90zM18.10 222.20h1.90v2.27h-1.90zM25.70 222.20h1.90v2.27h-1.90zM18.10 224.37h1.90v2.27h-1.90zM25.70 224.37h1.90v2.27h-1.90zM20.00 226.54h5.70v2.27h-5.70zM31.40 211.35h5.70v2.27h-5.70zM29.50 213.52h1.90v2.27h-1.90zM37.10 213.52h1.90v2.27h-1.90zM29.50 215.69h1.90v2.27h-1.90zM37.10 215.69h1.90v2.27h-1.90zM29.50 217.86h1.90v2.27h-1.90zM37.10 217.86h1.90v2.27h-1.90zM29.50 220.03h1.90v2.27h-1.90zM37.10 220.03h1.90v2.27h-1.90zM29.50 222.20h1.90v2.27h-1.90zM37.10 222.20h1.90v2.27h-1.90zM29.50 224.37h1.90v2.27h-1.90zM37.10 224.37h1.90v2.27h-1.90zM31.40 226.54h5.70v2.27h-5.70zM20.00 288.55h5.70v2.27h-5.70zM18.10 290.72h1.90v2.27h-1.90zM25.70 290.72h1.90v2.27h-1.90zM18.10 292.89h1.90v2.27h-1.90zM25.70 292.89h1.90v2.27h-1.90zM20.00 295.06h5.70v2.27h-5.70zM18.10 297.23h1.90v2.27h-1.90zM25.70 297.23h1.90v2.27h-1.90zM18.10 299.40h1.90v2.27h-1.90zM25.70 299.40h1.90v2.27h-1.90zM18.10 301.57h1.90v2.27h-1.90zM25.70 301.57h1.90v2.27h-1.90zM20.00 303.74h5.70v2.27h-5.70zM31.40 288.55h5.70v2.27h-5.70zM29.50 290.72h1.90v2.27h-1.90zM37.10 290.72h1.90v2.27h-1.90zM29.50 292.89h1.90v2.27h-1.90zM37.10 292.89h1.90v2.27h-1.90zM29.50 295.06h1.90v2.27h-1.90zM37.10 295.06h1.90v2.27h-1.90zM29.50 297.23h1.90v2.27h-1.90zM37.10 297.23h1.90v2.27h-1.90zM29.50 299.40h1.90v2.27h-1.90zM37.10 299.40h1.90v2.27h-1.90zM29.50 301.57h1.90v2.27h-1.90zM37.10 301.57h1.90v2.27h-1.90zM31.40 303.74h5.70v2.27h-5.70zM20.00 365.45h5.70v2.27h-5.70zM18.10 367.62h1.90v2.27h-1.90zM25.70 367.62h1.90v2.27h-1.90zM18.10 369.79h1.90v2.27h-1.90zM18.10 371.96h7.60v2.27h-7.60zM18.10 374.13h1.90v2.27h-1.90zM25.70 374.13h1.90v2.27h-1.90zM18.10 376.30h1.90v2.27h-1.90zM25.70 376.30h1.90v2.27h-1.90zM18.10 378.47h1.90v2.27h-1.90zM25.70 378.47h1.90v2.27h-1.90zM20.00 380.64h5.70v2.27h-5.70zM31.40 365.45h5.70v2.27h-5.70zM29.50 367.62h1.90v2.27h-1.90zM37.10 367.62h1.90v2.27h-1.90zM29.50 369.79h1.90v2.27h-1.90zM37.10 369.79h1.90v2.27h-1.90zM29.50 371.96h1.90v2.27h-1.90zM37.10 371.96h1.90v2.27h-1.90zM29.50 374.13h1.90v2.27h-1.90zM37.10 374.13h1.90v2.27h-1.90zM29.50 376.30h1.90v2.27h-1.90zM37.10 376.30h1.90v2.27h-1.90zM29.50 378.47h1.90v2.27h-1.90zM37.10 378.47h1.90v2.27h-1.90zM31.40 380.64h5.70v2.27h-5.70zM23.80 442.65h1.90v2.27h-1.90zM21.90 444.82h3.80v2.27h-3.80zM21.90 446.99h3.80v2.27h-3.80zM20.00 449.16h1.90v2.27h-1.90zM23.80 449.16h1.90v2.27h-1.90zM18.10 451.33h1.90v2.27h-1.90zM23.80 451.33h1.90v2.27h-1.90zM18.10 453.50h9.50v2.27h-9.50zM23.80 455.67h1.90v2.27h-1.90zM23.80 457.84h1.90v2.27h-1.90zM31.40 442.65h5.70v2.27h-5.70zM29.50 444.82h1.90v2.27h-1.90zM37.10 444.82h1.90v2.27h-1.90zM29.50 446.99h1.90v2.27h-1.90zM37.10 446.99h1.90v2.27h-1.90zM29.50 449.16h1.90v2.27h-1.90zM37.10 449.16h1.90v2.27h-1.90zM29.50 451.33h1.90v2.27h-1.90zM37.10 451.33h1.90v2.27h-1.90zM29.50 453.50h1.90v2.27h-1.90zM37.10 453.50h1.90v2.27h-1.90zM29.50 455.67h1.90v2.27h-1.90zM37.10 455.67h1.90v2.27h-1.90zM31.40 457.84h5.70v2.27h-5.70zM20.00 519.95h5.70v2.27h-5.70zM18.10 522.12h1.90v2.27h-1.90zM25.70 522.12h1.90v2.27h-1.90zM25.70 524.29h1.90v2.27h-1.90zM23.80 526.46h1.90v2.27h-1.90zM21.90 528.63h1.90v2.27h-1.90zM20.00 530.80h1.90v2.27h-1.90zM18.10 532.97h1.90v2.27h-1.90zM18.10 535.14h9.50v2.27h-9.50zM31.40 519.95h5.70v2.27h-5.70zM29.50 522.12h1.90v2.27h-1.90zM37.10 522.12h1.90v2.27h-1.90zM29.50 524.29h1.90v2.27h-1.90zM37.10 524.29h1.90v2.27h-1.90zM29.50 526.46h1.90v2.27h-1.90zM37.10 526.46h1.90v2.27h-1.90zM29.50 528.63h1.90v2.27h-1.90zM37.10 528.63h1.90v2.27h-1.90zM29.50 530.80h1.90v2.27h-1.90zM37.10 530.80h1.90v2.27h-1.90zM29.50 532.97h1.90v2.27h-1.90zM37.10 532.97h1.90v2.27h-1.90zM31.40 535.14h5.70v2.27h-5.70zM31.40 597.15h5.70v2.27h-5.70zM29.50 599.32h1.90v2.27h-1.90zM37.10 599.32h1.90v2.27h-1.90zM29.50 601.49h1.90v2.27h-1.90zM37.10 601.49h1.90v2.27h-1.90zM29.50 603.66h1.90v2.27h-1.90zM37.10 603.66h1.90v2.27h-1.90zM29.50 605.83h1.90v2.27h-1.90zM37.10 605.83h1.90v2.27h-1.90zM29.50 608.00h1.90v2.27h-1.90zM37.10 608.00h1.90v2.27h-1.90zM29.50 610.17h1.90v2.27h-1.90zM37.10 610.17h1.90v2.27h-1.90zM31.40 612.34h5.70v2.27h-5.70zM20.00 674.25h5.70v2.27h-5.70zM18.10 676.42h1.90v2.27h-1.90zM25.70 676.42h1.90v2.27h-1.90zM25.70 678.59h1.90v2.27h-1.90zM23.80 680.76h1.90v2.27h-1.90zM21.90 682.93h1.90v2.27h-1.90zM20.00 685.10h1.90v2.27h-1.90zM18.10 687.27h1.90v2.27h-1.90zM18.10 689.44h9.50v2.27h-9.50zM31.40 674.25h5.70v2.27h-5.70zM29.50 676.42h1.90v2.27h-1.90zM37.10 676.42h1.90v2.27h-1.90zM29.50 678.59h1.90v2.27h-1.90zM37.10 678.59h1.90v2.27h-1.90zM29.50 680.76h1.90v2.27h-1.90zM37.10 680.76h1.90v2.27h-1.90zM29.50 682.93h1.90v2.27h-1.90zM37.10 682.93h1.90v2.27h-1.90zM29.50 685.10h1.90v2.27h-1.90zM37.10 685.10h1.90v2.27h-1.90zM29.50 687.27h1.90v2.27h-1.90zM37.10 687.27h1.90v2.27h-1.90zM31.40 689.44h5.70v2.27h-5.70z"/>
</g>
</svg>
</body></html>
